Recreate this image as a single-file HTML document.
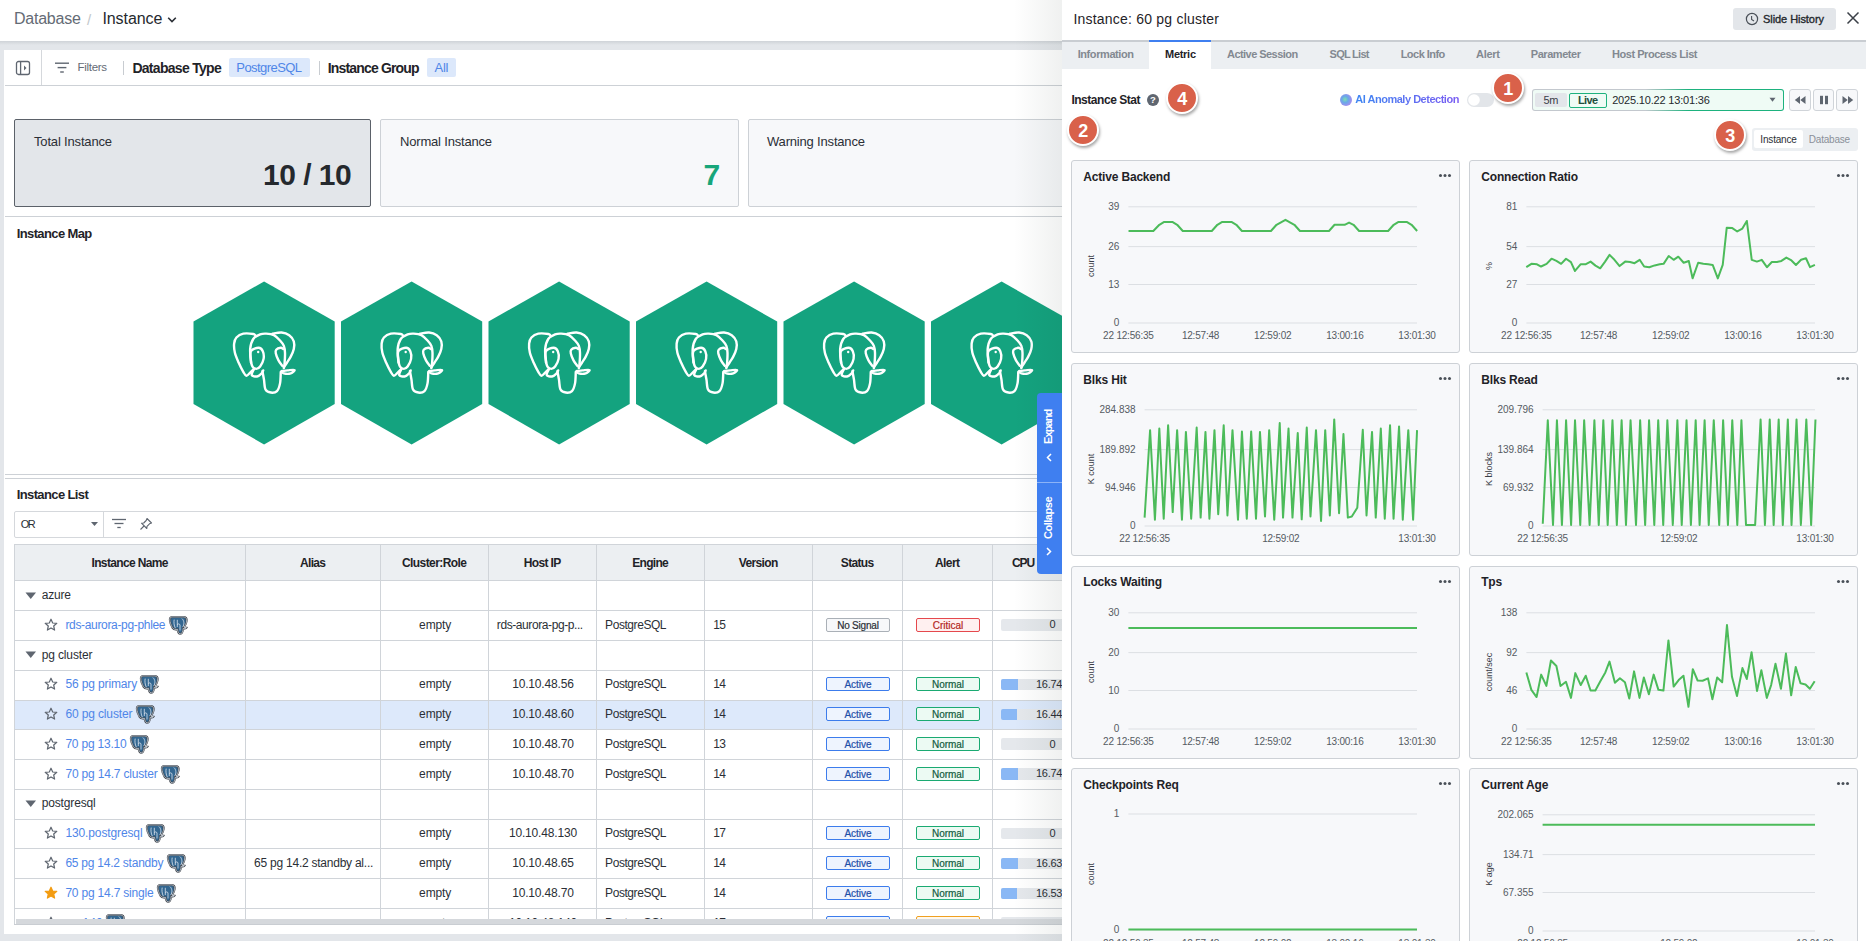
<!DOCTYPE html><html><head><meta charset="utf-8"><style>
html,body{margin:0;padding:0;}
body{width:1866px;height:941px;overflow:hidden;position:relative;background:#e3e6ea;font-family:'Liberation Sans', sans-serif;}
.t{position:absolute;white-space:nowrap;}
svg{position:absolute;overflow:visible;}
</style></head><body>
<div style="position:absolute;left:0px;top:0px;width:1866px;height:41px;background:#fff;"></div>
<div style="position:absolute;left:0px;top:41px;width:1866px;height:4px;background:linear-gradient(#cfd3d8,#e3e6ea);"></div>
<div class="t" style="left:13.90px;top:11.00px;font-size:16px;line-height:16px;letter-spacing:-0.214px;color:#646b75;">Database</div>
<div class="t" style="left:87.00px;top:12.00px;font-size:15px;line-height:15px;letter-spacing:0.000px;color:#c3c7cc;">/</div>
<div class="t" style="left:102.40px;top:11.00px;font-size:16px;line-height:16px;letter-spacing:-0.071px;color:#25292e;">Instance</div>
<svg style="left:167px;top:16px" width="10" height="8"><path d="M1.2 1.8 L5 5.6 L8.8 1.8" fill="none" stroke="#2b2f36" stroke-width="1.6"/></svg>
<div style="position:absolute;left:4px;top:50px;width:1858px;height:884px;background:#fff;"></div>
<div style="position:absolute;left:41px;top:50px;width:1px;height:35px;background:#d5d8dc;"></div>
<div style="position:absolute;left:5px;top:85px;width:1857px;height:1px;background:#cdd1d6;"></div>
<svg style="left:15px;top:60px" width="16" height="16"><rect x="1.5" y="1.5" width="13" height="13" rx="2" fill="none" stroke="#5f6670" stroke-width="1.3"/><line x1="5.6" y1="1.5" x2="5.6" y2="14.5" stroke="#5f6670" stroke-width="1.3"/><path d="M9 5.5 L11.5 8 L9 10.5 Z" fill="#5f6670"/></svg>
<svg style="left:54px;top:62px" width="16" height="12"><line x1="1" y1="1.2" x2="15" y2="1.2" stroke="#5f6670" stroke-width="1.4"/><line x1="3.6" y1="5.6" x2="12.4" y2="5.6" stroke="#5f6670" stroke-width="1.4"/><line x1="6.2" y1="10" x2="9.8" y2="10" stroke="#5f6670" stroke-width="1.4"/></svg>
<div class="t" style="left:77.50px;top:62.00px;font-size:11.5px;line-height:11.5px;letter-spacing:-0.300px;color:#646b75;">Filters</div>
<div style="position:absolute;left:123px;top:61px;width:1px;height:14px;background:#c8ccd1;"></div>
<div class="t" style="left:132.40px;top:61.00px;font-size:14px;line-height:14px;letter-spacing:-0.708px;color:#1f2328;font-weight:bold;">Database Type</div>
<div style="position:absolute;left:229px;top:58px;width:81px;height:19px;background:#dce8fb;border-radius:2px;"></div>
<div class="t" style="left:236.30px;top:61.00px;font-size:13px;line-height:13px;letter-spacing:-0.567px;color:#4f86e8;">PostgreSQL</div>
<div style="position:absolute;left:319px;top:61px;width:1px;height:14px;background:#c8ccd1;"></div>
<div class="t" style="left:327.80px;top:61.00px;font-size:14px;line-height:14px;letter-spacing:-0.838px;color:#1f2328;font-weight:bold;">Instance Group</div>
<div style="position:absolute;left:427px;top:58px;width:29px;height:19px;background:#dce8fb;border-radius:2px;"></div>
<div class="t" style="left:434.53px;top:61.00px;font-size:13px;line-height:13px;letter-spacing:-0.253px;color:#4f86e8;">All</div>
<div style="position:absolute;left:14px;top:119px;width:355px;height:86px;background:#e3e6ea;border:1px solid #5b6169;border-radius:2px;"></div>
<div class="t" style="left:34.00px;top:135.00px;font-size:13px;line-height:13px;letter-spacing:-0.169px;color:#2b2f36;">Total Instance</div>
<div class="t" style="left:263.00px;top:160.00px;font-size:30px;line-height:30px;letter-spacing:-0.525px;color:#25292e;font-weight:bold;">10 / 10</div>
<div style="position:absolute;left:380px;top:119px;width:357px;height:86px;background:#f7f8fa;border:1px solid #cdd1d6;border-radius:2px;"></div>
<div class="t" style="left:400.00px;top:135.00px;font-size:13px;line-height:13px;letter-spacing:-0.183px;color:#2b2f36;">Normal Instance</div>
<div class="t" style="left:703.54px;top:160.00px;font-size:30px;line-height:30px;letter-spacing:0.000px;color:#17a67a;font-weight:bold;">7</div>
<div style="position:absolute;left:748px;top:119px;width:357px;height:86px;background:#f7f8fa;border:1px solid #cdd1d6;border-radius:2px;"></div>
<div class="t" style="left:767.00px;top:135.00px;font-size:13px;line-height:13px;letter-spacing:-0.181px;color:#2b2f36;">Warning Instance</div>
<div style="position:absolute;left:5px;top:216px;width:1857px;height:1px;background:#cdd1d6;"></div>
<div class="t" style="left:16.70px;top:227.00px;font-size:13px;line-height:13px;letter-spacing:-0.614px;color:#1f2328;font-weight:bold;">Instance Map</div>
<svg style="left:0px;top:281px" width="1062" height="165"><g transform="translate(193.50,0)"><polygon points="70.6,0.5 141.2,40.5 141.2,123 70.6,163.5 0,123 0,40.5" fill="#14a37f"/><g transform="translate(39.5,51)"><g fill="none" stroke="#fff" stroke-width="2.4" stroke-linecap="round" stroke-linejoin="round"><path d="M22.93 3.95 C22.48 3.63 22.35 2.42 20.25 2.03 C18.14 1.65 13.11 1.08 10.30 1.65 C7.50 2.22 4.95 3.82 3.42 5.48 C1.89 7.13 1.38 9.05 1.12 11.60 C0.87 14.15 1.12 17.59 1.89 20.78 C2.65 23.97 4.31 27.54 5.71 30.73 C7.11 33.91 9.03 37.74 10.30 39.91 C11.58 42.07 12.21 43.60 13.36 43.73 C14.51 43.86 15.91 41.82 17.19 40.67 C18.46 39.52 20.38 37.48 21.01 36.85"/><path d="M17.95 30.73 C17.83 28.43 16.81 20.91 17.19 16.95 C17.57 13.00 18.59 9.43 20.25 7.01 C21.91 4.58 24.97 3.31 27.13 2.42 C29.30 1.52 30.96 1.52 33.26 1.65 C35.55 1.78 38.61 2.03 40.91 3.18 C43.20 4.33 45.37 6.75 47.03 8.54 C48.69 10.32 50.02 11.85 50.85 13.89 C51.68 15.93 51.87 17.97 52.00 20.78 C52.13 23.58 51.81 28.17 51.62 30.73 C51.43 33.28 50.98 35.19 50.85 36.08"/><path d="M39.38 1.65 C40.91 1.46 45.75 0.25 48.56 0.50 C51.36 0.76 54.17 1.71 56.21 3.18 C58.25 4.65 60.03 7.01 60.80 9.30 C61.56 11.60 61.31 14.40 60.80 16.95 C60.29 19.50 58.89 22.31 57.74 24.60 C56.59 26.90 55.06 28.94 53.91 30.73 C52.77 32.51 51.36 34.55 50.85 35.32"/><path d="M17.95 19.25 C19.23 17.14 23.63 15.81 25.60 15.81 C27.58 15.81 28.98 17.40 29.81 19.25 C30.64 21.10 31.02 24.35 30.58 26.90 C30.13 29.45 28.35 32.89 27.13 34.55 C25.92 36.21 24.58 36.85 23.31 36.85 C22.03 36.85 20.38 35.95 19.48 34.55 C18.59 33.15 18.21 30.98 17.95 28.43 C17.70 25.88 16.68 21.35 17.95 19.25 Z"/><path d="M50.09 16.95 C49.71 16.76 48.94 15.68 47.79 15.81 C46.64 15.93 44.03 16.76 43.20 17.72 C42.37 18.67 42.44 19.76 42.82 21.54 C43.20 23.33 44.41 26.39 45.50 28.43 C46.58 30.47 48.69 32.89 49.32 33.79"/><path d="M29.43 39.14 C29.69 40.54 30.45 44.50 30.96 47.56 C31.47 50.62 31.34 55.34 32.49 57.50 C33.64 59.67 35.93 60.31 37.85 60.56 C39.76 60.82 42.44 60.56 43.97 59.03 C45.50 57.50 46.39 54.57 47.03 51.38 C47.67 48.20 47.67 41.82 47.79 39.91"/><path d="M21.01 36.85 C20.63 37.87 18.21 41.69 18.72 42.97 C19.23 44.24 22.42 44.75 24.07 44.50 C25.73 44.24 27.64 42.46 28.66 41.44 C29.69 40.42 29.94 38.89 30.20 38.38"/><path d="M48.56 39.14 C49.58 39.01 52.51 38.57 54.68 38.38 C56.85 38.19 61.05 37.48 61.56 37.99 C62.07 38.50 59.52 40.86 57.74 41.44 C55.95 42.01 52.38 41.82 50.85 41.44 C49.32 41.05 48.94 39.52 48.56 39.14"/><circle cx="25.2" cy="20" r="1.2" fill="#fff" stroke="none"/></g></g></g><g transform="translate(341.00,0)"><polygon points="70.6,0.5 141.2,40.5 141.2,123 70.6,163.5 0,123 0,40.5" fill="#14a37f"/><g transform="translate(39.5,51)"><g fill="none" stroke="#fff" stroke-width="2.4" stroke-linecap="round" stroke-linejoin="round"><path d="M22.93 3.95 C22.48 3.63 22.35 2.42 20.25 2.03 C18.14 1.65 13.11 1.08 10.30 1.65 C7.50 2.22 4.95 3.82 3.42 5.48 C1.89 7.13 1.38 9.05 1.12 11.60 C0.87 14.15 1.12 17.59 1.89 20.78 C2.65 23.97 4.31 27.54 5.71 30.73 C7.11 33.91 9.03 37.74 10.30 39.91 C11.58 42.07 12.21 43.60 13.36 43.73 C14.51 43.86 15.91 41.82 17.19 40.67 C18.46 39.52 20.38 37.48 21.01 36.85"/><path d="M17.95 30.73 C17.83 28.43 16.81 20.91 17.19 16.95 C17.57 13.00 18.59 9.43 20.25 7.01 C21.91 4.58 24.97 3.31 27.13 2.42 C29.30 1.52 30.96 1.52 33.26 1.65 C35.55 1.78 38.61 2.03 40.91 3.18 C43.20 4.33 45.37 6.75 47.03 8.54 C48.69 10.32 50.02 11.85 50.85 13.89 C51.68 15.93 51.87 17.97 52.00 20.78 C52.13 23.58 51.81 28.17 51.62 30.73 C51.43 33.28 50.98 35.19 50.85 36.08"/><path d="M39.38 1.65 C40.91 1.46 45.75 0.25 48.56 0.50 C51.36 0.76 54.17 1.71 56.21 3.18 C58.25 4.65 60.03 7.01 60.80 9.30 C61.56 11.60 61.31 14.40 60.80 16.95 C60.29 19.50 58.89 22.31 57.74 24.60 C56.59 26.90 55.06 28.94 53.91 30.73 C52.77 32.51 51.36 34.55 50.85 35.32"/><path d="M17.95 19.25 C19.23 17.14 23.63 15.81 25.60 15.81 C27.58 15.81 28.98 17.40 29.81 19.25 C30.64 21.10 31.02 24.35 30.58 26.90 C30.13 29.45 28.35 32.89 27.13 34.55 C25.92 36.21 24.58 36.85 23.31 36.85 C22.03 36.85 20.38 35.95 19.48 34.55 C18.59 33.15 18.21 30.98 17.95 28.43 C17.70 25.88 16.68 21.35 17.95 19.25 Z"/><path d="M50.09 16.95 C49.71 16.76 48.94 15.68 47.79 15.81 C46.64 15.93 44.03 16.76 43.20 17.72 C42.37 18.67 42.44 19.76 42.82 21.54 C43.20 23.33 44.41 26.39 45.50 28.43 C46.58 30.47 48.69 32.89 49.32 33.79"/><path d="M29.43 39.14 C29.69 40.54 30.45 44.50 30.96 47.56 C31.47 50.62 31.34 55.34 32.49 57.50 C33.64 59.67 35.93 60.31 37.85 60.56 C39.76 60.82 42.44 60.56 43.97 59.03 C45.50 57.50 46.39 54.57 47.03 51.38 C47.67 48.20 47.67 41.82 47.79 39.91"/><path d="M21.01 36.85 C20.63 37.87 18.21 41.69 18.72 42.97 C19.23 44.24 22.42 44.75 24.07 44.50 C25.73 44.24 27.64 42.46 28.66 41.44 C29.69 40.42 29.94 38.89 30.20 38.38"/><path d="M48.56 39.14 C49.58 39.01 52.51 38.57 54.68 38.38 C56.85 38.19 61.05 37.48 61.56 37.99 C62.07 38.50 59.52 40.86 57.74 41.44 C55.95 42.01 52.38 41.82 50.85 41.44 C49.32 41.05 48.94 39.52 48.56 39.14"/><circle cx="25.2" cy="20" r="1.2" fill="#fff" stroke="none"/></g></g></g><g transform="translate(488.50,0)"><polygon points="70.6,0.5 141.2,40.5 141.2,123 70.6,163.5 0,123 0,40.5" fill="#14a37f"/><g transform="translate(39.5,51)"><g fill="none" stroke="#fff" stroke-width="2.4" stroke-linecap="round" stroke-linejoin="round"><path d="M22.93 3.95 C22.48 3.63 22.35 2.42 20.25 2.03 C18.14 1.65 13.11 1.08 10.30 1.65 C7.50 2.22 4.95 3.82 3.42 5.48 C1.89 7.13 1.38 9.05 1.12 11.60 C0.87 14.15 1.12 17.59 1.89 20.78 C2.65 23.97 4.31 27.54 5.71 30.73 C7.11 33.91 9.03 37.74 10.30 39.91 C11.58 42.07 12.21 43.60 13.36 43.73 C14.51 43.86 15.91 41.82 17.19 40.67 C18.46 39.52 20.38 37.48 21.01 36.85"/><path d="M17.95 30.73 C17.83 28.43 16.81 20.91 17.19 16.95 C17.57 13.00 18.59 9.43 20.25 7.01 C21.91 4.58 24.97 3.31 27.13 2.42 C29.30 1.52 30.96 1.52 33.26 1.65 C35.55 1.78 38.61 2.03 40.91 3.18 C43.20 4.33 45.37 6.75 47.03 8.54 C48.69 10.32 50.02 11.85 50.85 13.89 C51.68 15.93 51.87 17.97 52.00 20.78 C52.13 23.58 51.81 28.17 51.62 30.73 C51.43 33.28 50.98 35.19 50.85 36.08"/><path d="M39.38 1.65 C40.91 1.46 45.75 0.25 48.56 0.50 C51.36 0.76 54.17 1.71 56.21 3.18 C58.25 4.65 60.03 7.01 60.80 9.30 C61.56 11.60 61.31 14.40 60.80 16.95 C60.29 19.50 58.89 22.31 57.74 24.60 C56.59 26.90 55.06 28.94 53.91 30.73 C52.77 32.51 51.36 34.55 50.85 35.32"/><path d="M17.95 19.25 C19.23 17.14 23.63 15.81 25.60 15.81 C27.58 15.81 28.98 17.40 29.81 19.25 C30.64 21.10 31.02 24.35 30.58 26.90 C30.13 29.45 28.35 32.89 27.13 34.55 C25.92 36.21 24.58 36.85 23.31 36.85 C22.03 36.85 20.38 35.95 19.48 34.55 C18.59 33.15 18.21 30.98 17.95 28.43 C17.70 25.88 16.68 21.35 17.95 19.25 Z"/><path d="M50.09 16.95 C49.71 16.76 48.94 15.68 47.79 15.81 C46.64 15.93 44.03 16.76 43.20 17.72 C42.37 18.67 42.44 19.76 42.82 21.54 C43.20 23.33 44.41 26.39 45.50 28.43 C46.58 30.47 48.69 32.89 49.32 33.79"/><path d="M29.43 39.14 C29.69 40.54 30.45 44.50 30.96 47.56 C31.47 50.62 31.34 55.34 32.49 57.50 C33.64 59.67 35.93 60.31 37.85 60.56 C39.76 60.82 42.44 60.56 43.97 59.03 C45.50 57.50 46.39 54.57 47.03 51.38 C47.67 48.20 47.67 41.82 47.79 39.91"/><path d="M21.01 36.85 C20.63 37.87 18.21 41.69 18.72 42.97 C19.23 44.24 22.42 44.75 24.07 44.50 C25.73 44.24 27.64 42.46 28.66 41.44 C29.69 40.42 29.94 38.89 30.20 38.38"/><path d="M48.56 39.14 C49.58 39.01 52.51 38.57 54.68 38.38 C56.85 38.19 61.05 37.48 61.56 37.99 C62.07 38.50 59.52 40.86 57.74 41.44 C55.95 42.01 52.38 41.82 50.85 41.44 C49.32 41.05 48.94 39.52 48.56 39.14"/><circle cx="25.2" cy="20" r="1.2" fill="#fff" stroke="none"/></g></g></g><g transform="translate(636.00,0)"><polygon points="70.6,0.5 141.2,40.5 141.2,123 70.6,163.5 0,123 0,40.5" fill="#14a37f"/><g transform="translate(39.5,51)"><g fill="none" stroke="#fff" stroke-width="2.4" stroke-linecap="round" stroke-linejoin="round"><path d="M22.93 3.95 C22.48 3.63 22.35 2.42 20.25 2.03 C18.14 1.65 13.11 1.08 10.30 1.65 C7.50 2.22 4.95 3.82 3.42 5.48 C1.89 7.13 1.38 9.05 1.12 11.60 C0.87 14.15 1.12 17.59 1.89 20.78 C2.65 23.97 4.31 27.54 5.71 30.73 C7.11 33.91 9.03 37.74 10.30 39.91 C11.58 42.07 12.21 43.60 13.36 43.73 C14.51 43.86 15.91 41.82 17.19 40.67 C18.46 39.52 20.38 37.48 21.01 36.85"/><path d="M17.95 30.73 C17.83 28.43 16.81 20.91 17.19 16.95 C17.57 13.00 18.59 9.43 20.25 7.01 C21.91 4.58 24.97 3.31 27.13 2.42 C29.30 1.52 30.96 1.52 33.26 1.65 C35.55 1.78 38.61 2.03 40.91 3.18 C43.20 4.33 45.37 6.75 47.03 8.54 C48.69 10.32 50.02 11.85 50.85 13.89 C51.68 15.93 51.87 17.97 52.00 20.78 C52.13 23.58 51.81 28.17 51.62 30.73 C51.43 33.28 50.98 35.19 50.85 36.08"/><path d="M39.38 1.65 C40.91 1.46 45.75 0.25 48.56 0.50 C51.36 0.76 54.17 1.71 56.21 3.18 C58.25 4.65 60.03 7.01 60.80 9.30 C61.56 11.60 61.31 14.40 60.80 16.95 C60.29 19.50 58.89 22.31 57.74 24.60 C56.59 26.90 55.06 28.94 53.91 30.73 C52.77 32.51 51.36 34.55 50.85 35.32"/><path d="M17.95 19.25 C19.23 17.14 23.63 15.81 25.60 15.81 C27.58 15.81 28.98 17.40 29.81 19.25 C30.64 21.10 31.02 24.35 30.58 26.90 C30.13 29.45 28.35 32.89 27.13 34.55 C25.92 36.21 24.58 36.85 23.31 36.85 C22.03 36.85 20.38 35.95 19.48 34.55 C18.59 33.15 18.21 30.98 17.95 28.43 C17.70 25.88 16.68 21.35 17.95 19.25 Z"/><path d="M50.09 16.95 C49.71 16.76 48.94 15.68 47.79 15.81 C46.64 15.93 44.03 16.76 43.20 17.72 C42.37 18.67 42.44 19.76 42.82 21.54 C43.20 23.33 44.41 26.39 45.50 28.43 C46.58 30.47 48.69 32.89 49.32 33.79"/><path d="M29.43 39.14 C29.69 40.54 30.45 44.50 30.96 47.56 C31.47 50.62 31.34 55.34 32.49 57.50 C33.64 59.67 35.93 60.31 37.85 60.56 C39.76 60.82 42.44 60.56 43.97 59.03 C45.50 57.50 46.39 54.57 47.03 51.38 C47.67 48.20 47.67 41.82 47.79 39.91"/><path d="M21.01 36.85 C20.63 37.87 18.21 41.69 18.72 42.97 C19.23 44.24 22.42 44.75 24.07 44.50 C25.73 44.24 27.64 42.46 28.66 41.44 C29.69 40.42 29.94 38.89 30.20 38.38"/><path d="M48.56 39.14 C49.58 39.01 52.51 38.57 54.68 38.38 C56.85 38.19 61.05 37.48 61.56 37.99 C62.07 38.50 59.52 40.86 57.74 41.44 C55.95 42.01 52.38 41.82 50.85 41.44 C49.32 41.05 48.94 39.52 48.56 39.14"/><circle cx="25.2" cy="20" r="1.2" fill="#fff" stroke="none"/></g></g></g><g transform="translate(783.50,0)"><polygon points="70.6,0.5 141.2,40.5 141.2,123 70.6,163.5 0,123 0,40.5" fill="#14a37f"/><g transform="translate(39.5,51)"><g fill="none" stroke="#fff" stroke-width="2.4" stroke-linecap="round" stroke-linejoin="round"><path d="M22.93 3.95 C22.48 3.63 22.35 2.42 20.25 2.03 C18.14 1.65 13.11 1.08 10.30 1.65 C7.50 2.22 4.95 3.82 3.42 5.48 C1.89 7.13 1.38 9.05 1.12 11.60 C0.87 14.15 1.12 17.59 1.89 20.78 C2.65 23.97 4.31 27.54 5.71 30.73 C7.11 33.91 9.03 37.74 10.30 39.91 C11.58 42.07 12.21 43.60 13.36 43.73 C14.51 43.86 15.91 41.82 17.19 40.67 C18.46 39.52 20.38 37.48 21.01 36.85"/><path d="M17.95 30.73 C17.83 28.43 16.81 20.91 17.19 16.95 C17.57 13.00 18.59 9.43 20.25 7.01 C21.91 4.58 24.97 3.31 27.13 2.42 C29.30 1.52 30.96 1.52 33.26 1.65 C35.55 1.78 38.61 2.03 40.91 3.18 C43.20 4.33 45.37 6.75 47.03 8.54 C48.69 10.32 50.02 11.85 50.85 13.89 C51.68 15.93 51.87 17.97 52.00 20.78 C52.13 23.58 51.81 28.17 51.62 30.73 C51.43 33.28 50.98 35.19 50.85 36.08"/><path d="M39.38 1.65 C40.91 1.46 45.75 0.25 48.56 0.50 C51.36 0.76 54.17 1.71 56.21 3.18 C58.25 4.65 60.03 7.01 60.80 9.30 C61.56 11.60 61.31 14.40 60.80 16.95 C60.29 19.50 58.89 22.31 57.74 24.60 C56.59 26.90 55.06 28.94 53.91 30.73 C52.77 32.51 51.36 34.55 50.85 35.32"/><path d="M17.95 19.25 C19.23 17.14 23.63 15.81 25.60 15.81 C27.58 15.81 28.98 17.40 29.81 19.25 C30.64 21.10 31.02 24.35 30.58 26.90 C30.13 29.45 28.35 32.89 27.13 34.55 C25.92 36.21 24.58 36.85 23.31 36.85 C22.03 36.85 20.38 35.95 19.48 34.55 C18.59 33.15 18.21 30.98 17.95 28.43 C17.70 25.88 16.68 21.35 17.95 19.25 Z"/><path d="M50.09 16.95 C49.71 16.76 48.94 15.68 47.79 15.81 C46.64 15.93 44.03 16.76 43.20 17.72 C42.37 18.67 42.44 19.76 42.82 21.54 C43.20 23.33 44.41 26.39 45.50 28.43 C46.58 30.47 48.69 32.89 49.32 33.79"/><path d="M29.43 39.14 C29.69 40.54 30.45 44.50 30.96 47.56 C31.47 50.62 31.34 55.34 32.49 57.50 C33.64 59.67 35.93 60.31 37.85 60.56 C39.76 60.82 42.44 60.56 43.97 59.03 C45.50 57.50 46.39 54.57 47.03 51.38 C47.67 48.20 47.67 41.82 47.79 39.91"/><path d="M21.01 36.85 C20.63 37.87 18.21 41.69 18.72 42.97 C19.23 44.24 22.42 44.75 24.07 44.50 C25.73 44.24 27.64 42.46 28.66 41.44 C29.69 40.42 29.94 38.89 30.20 38.38"/><path d="M48.56 39.14 C49.58 39.01 52.51 38.57 54.68 38.38 C56.85 38.19 61.05 37.48 61.56 37.99 C62.07 38.50 59.52 40.86 57.74 41.44 C55.95 42.01 52.38 41.82 50.85 41.44 C49.32 41.05 48.94 39.52 48.56 39.14"/><circle cx="25.2" cy="20" r="1.2" fill="#fff" stroke="none"/></g></g></g><g transform="translate(931.00,0)"><polygon points="70.6,0.5 141.2,40.5 141.2,123 70.6,163.5 0,123 0,40.5" fill="#14a37f"/><g transform="translate(39.5,51)"><g fill="none" stroke="#fff" stroke-width="2.4" stroke-linecap="round" stroke-linejoin="round"><path d="M22.93 3.95 C22.48 3.63 22.35 2.42 20.25 2.03 C18.14 1.65 13.11 1.08 10.30 1.65 C7.50 2.22 4.95 3.82 3.42 5.48 C1.89 7.13 1.38 9.05 1.12 11.60 C0.87 14.15 1.12 17.59 1.89 20.78 C2.65 23.97 4.31 27.54 5.71 30.73 C7.11 33.91 9.03 37.74 10.30 39.91 C11.58 42.07 12.21 43.60 13.36 43.73 C14.51 43.86 15.91 41.82 17.19 40.67 C18.46 39.52 20.38 37.48 21.01 36.85"/><path d="M17.95 30.73 C17.83 28.43 16.81 20.91 17.19 16.95 C17.57 13.00 18.59 9.43 20.25 7.01 C21.91 4.58 24.97 3.31 27.13 2.42 C29.30 1.52 30.96 1.52 33.26 1.65 C35.55 1.78 38.61 2.03 40.91 3.18 C43.20 4.33 45.37 6.75 47.03 8.54 C48.69 10.32 50.02 11.85 50.85 13.89 C51.68 15.93 51.87 17.97 52.00 20.78 C52.13 23.58 51.81 28.17 51.62 30.73 C51.43 33.28 50.98 35.19 50.85 36.08"/><path d="M39.38 1.65 C40.91 1.46 45.75 0.25 48.56 0.50 C51.36 0.76 54.17 1.71 56.21 3.18 C58.25 4.65 60.03 7.01 60.80 9.30 C61.56 11.60 61.31 14.40 60.80 16.95 C60.29 19.50 58.89 22.31 57.74 24.60 C56.59 26.90 55.06 28.94 53.91 30.73 C52.77 32.51 51.36 34.55 50.85 35.32"/><path d="M17.95 19.25 C19.23 17.14 23.63 15.81 25.60 15.81 C27.58 15.81 28.98 17.40 29.81 19.25 C30.64 21.10 31.02 24.35 30.58 26.90 C30.13 29.45 28.35 32.89 27.13 34.55 C25.92 36.21 24.58 36.85 23.31 36.85 C22.03 36.85 20.38 35.95 19.48 34.55 C18.59 33.15 18.21 30.98 17.95 28.43 C17.70 25.88 16.68 21.35 17.95 19.25 Z"/><path d="M50.09 16.95 C49.71 16.76 48.94 15.68 47.79 15.81 C46.64 15.93 44.03 16.76 43.20 17.72 C42.37 18.67 42.44 19.76 42.82 21.54 C43.20 23.33 44.41 26.39 45.50 28.43 C46.58 30.47 48.69 32.89 49.32 33.79"/><path d="M29.43 39.14 C29.69 40.54 30.45 44.50 30.96 47.56 C31.47 50.62 31.34 55.34 32.49 57.50 C33.64 59.67 35.93 60.31 37.85 60.56 C39.76 60.82 42.44 60.56 43.97 59.03 C45.50 57.50 46.39 54.57 47.03 51.38 C47.67 48.20 47.67 41.82 47.79 39.91"/><path d="M21.01 36.85 C20.63 37.87 18.21 41.69 18.72 42.97 C19.23 44.24 22.42 44.75 24.07 44.50 C25.73 44.24 27.64 42.46 28.66 41.44 C29.69 40.42 29.94 38.89 30.20 38.38"/><path d="M48.56 39.14 C49.58 39.01 52.51 38.57 54.68 38.38 C56.85 38.19 61.05 37.48 61.56 37.99 C62.07 38.50 59.52 40.86 57.74 41.44 C55.95 42.01 52.38 41.82 50.85 41.44 C49.32 41.05 48.94 39.52 48.56 39.14"/><circle cx="25.2" cy="20" r="1.2" fill="#fff" stroke="none"/></g></g></g></svg>
<div style="position:absolute;left:5px;top:474px;width:1857px;height:1px;background:#cdd1d6;"></div>
<div style="position:absolute;left:5px;top:478px;width:1857px;height:1px;background:#cdd1d6;"></div>
<div class="t" style="left:16.70px;top:488.00px;font-size:13px;line-height:13px;letter-spacing:-0.613px;color:#1f2328;font-weight:bold;">Instance List</div>
<div style="position:absolute;left:14px;top:511px;width:1848px;height:25px;border:1px solid #d5d8dc;border-radius:2px;"></div>
<div style="position:absolute;left:103px;top:512px;width:1px;height:25px;background:#d5d8dc;"></div>
<div class="t" style="left:20.80px;top:519.00px;font-size:11px;line-height:11px;letter-spacing:-1.600px;color:#2b2f36;">OR</div>
<svg style="left:91px;top:522px" width="8" height="5"><path d="M0 0 L7 0 L3.5 4 Z" fill="#5f6670"/></svg>
<svg style="left:111px;top:518px" width="16" height="12"><line x1="1" y1="1.5" x2="15" y2="1.5" stroke="#5f6670" stroke-width="1.3"/><line x1="3.5" y1="5.5" x2="12.5" y2="5.5" stroke="#5f6670" stroke-width="1.3"/><line x1="6.3" y1="9.5" x2="9.7" y2="9.5" stroke="#5f6670" stroke-width="1.3"/></svg>
<svg style="left:139px;top:517px" width="14" height="14"><path d="M8 1.5 L12.5 6 L10.5 6.8 L8 9.3 L7.8 11.5 L2.5 6.2 L4.7 6 L7.2 3.5 Z" fill="none" stroke="#5f6670" stroke-width="1.1" stroke-linejoin="round"/><line x1="5" y1="9" x2="1.5" y2="12.5" stroke="#5f6670" stroke-width="1.1"/></svg>
<div style="position:absolute;left:14px;top:544px;width:1848px;height:381px;overflow:hidden;">
<div style="position:absolute;left:0.00px;top:0.50px;width:1848.00px;height:36.00px;background:#eceff2;"></div>
<div style="position:absolute;left:0.00px;top:155.50px;width:1848.00px;height:29.80px;background:#dde9fb;"></div>
<div style="position:absolute;left:0.00px;top:0.00px;width:1848.00px;height:1.00px;background:#d0d4d9;"></div>
<div style="position:absolute;left:0.00px;top:36.30px;width:1848.00px;height:1.00px;background:#d0d4d9;"></div>
<div style="position:absolute;left:0.00px;top:66.20px;width:1848.00px;height:1.00px;background:#d0d4d9;"></div>
<div style="position:absolute;left:0.00px;top:96.00px;width:1848.00px;height:1.00px;background:#d0d4d9;"></div>
<div style="position:absolute;left:0.00px;top:125.60px;width:1848.00px;height:1.00px;background:#d0d4d9;"></div>
<div style="position:absolute;left:0.00px;top:155.50px;width:1848.00px;height:1.00px;background:#d0d4d9;"></div>
<div style="position:absolute;left:0.00px;top:185.30px;width:1848.00px;height:1.00px;background:#d0d4d9;"></div>
<div style="position:absolute;left:0.00px;top:215.20px;width:1848.00px;height:1.00px;background:#d0d4d9;"></div>
<div style="position:absolute;left:0.00px;top:244.80px;width:1848.00px;height:1.00px;background:#d0d4d9;"></div>
<div style="position:absolute;left:0.00px;top:274.50px;width:1848.00px;height:1.00px;background:#d0d4d9;"></div>
<div style="position:absolute;left:0.00px;top:304.40px;width:1848.00px;height:1.00px;background:#d0d4d9;"></div>
<div style="position:absolute;left:0.00px;top:334.40px;width:1848.00px;height:1.00px;background:#d0d4d9;"></div>
<div style="position:absolute;left:0.00px;top:364.30px;width:1848.00px;height:1.00px;background:#d0d4d9;"></div>
<div style="position:absolute;left:0.00px;top:0.00px;width:1.00px;height:381.00px;background:#d0d4d9;"></div>
<div style="position:absolute;left:231.00px;top:0.00px;width:1.00px;height:381.00px;background:#d0d4d9;"></div>
<div style="position:absolute;left:366.00px;top:0.00px;width:1.00px;height:381.00px;background:#d0d4d9;"></div>
<div style="position:absolute;left:474.00px;top:0.00px;width:1.00px;height:381.00px;background:#d0d4d9;"></div>
<div style="position:absolute;left:582.00px;top:0.00px;width:1.00px;height:381.00px;background:#d0d4d9;"></div>
<div style="position:absolute;left:690.00px;top:0.00px;width:1.00px;height:381.00px;background:#d0d4d9;"></div>
<div style="position:absolute;left:798.00px;top:0.00px;width:1.00px;height:381.00px;background:#d0d4d9;"></div>
<div style="position:absolute;left:888.00px;top:0.00px;width:1.00px;height:381.00px;background:#d0d4d9;"></div>
<div style="position:absolute;left:978.00px;top:0.00px;width:1.00px;height:381.00px;background:#d0d4d9;"></div>
<div style="position:absolute;left:1068.00px;top:0.00px;width:1.00px;height:381.00px;background:#d0d4d9;"></div>
<div class="t" style="left:77.46px;top:13.00px;font-size:12px;line-height:12px;letter-spacing:-0.635px;color:#1f2328;font-weight:bold;">Instance Name</div>
<div class="t" style="left:285.94px;top:13.00px;font-size:12px;line-height:12px;letter-spacing:-0.646px;color:#1f2328;font-weight:bold;">Alias</div>
<div class="t" style="left:388.04px;top:13.00px;font-size:12px;line-height:12px;letter-spacing:-0.584px;color:#1f2328;font-weight:bold;">Cluster:Role</div>
<div class="t" style="left:509.69px;top:13.00px;font-size:12px;line-height:12px;letter-spacing:-0.620px;color:#1f2328;font-weight:bold;">Host IP</div>
<div class="t" style="left:618.30px;top:13.00px;font-size:12px;line-height:12px;letter-spacing:-0.720px;color:#1f2328;font-weight:bold;">Engine</div>
<div class="t" style="left:724.78px;top:13.00px;font-size:12px;line-height:12px;letter-spacing:-0.650px;color:#1f2328;font-weight:bold;">Version</div>
<div class="t" style="left:826.80px;top:13.00px;font-size:12px;line-height:12px;letter-spacing:-0.661px;color:#1f2328;font-weight:bold;">Status</div>
<div class="t" style="left:921.06px;top:13.00px;font-size:12px;line-height:12px;letter-spacing:-0.615px;color:#1f2328;font-weight:bold;">Alert</div>
<div class="t" style="left:998.00px;top:13.00px;font-size:12px;line-height:12px;letter-spacing:-1.141px;color:#1f2328;font-weight:bold;">CPU</div>
<svg style="left:10.50px;top:47.75px" width="12" height="8"><path d="M0.5 0.5 L11 0.5 L5.75 7 Z" fill="#5f6670"/></svg>
<div class="t" style="left:27.70px;top:45.00px;font-size:12px;line-height:12px;letter-spacing:-0.180px;color:#2b2f36;">azure</div>
<svg style="left:30.00px;top:73.60px" width="14" height="14"><path d="M7 1.2 L8.7 5 L12.8 5.3 L9.7 8 L10.6 12.1 L7 9.9 L3.4 12.1 L4.3 8 L1.2 5.3 L5.3 5 Z" fill="none" stroke="#5f6670" stroke-width="1.2" stroke-linejoin="round"/></svg>
<div class="t" style="left:51.40px;top:75.00px;font-size:12px;line-height:12px;letter-spacing:-0.331px;color:#4f86e8;">rds-aurora-pg-phlee</div>
<svg style="left:154.50px;top:71.80px" width="19" height="19" viewBox="0 0 19 19"><path d="M3 0.9 L15 0.9 C17 1.2 17.9 3 17.7 5 C17.4 7.5 16.3 9.5 15.2 10.8 L17.6 11.6 C17.1 12.6 15.6 12.7 14.1 12.3 C13.9 15.2 13.5 17.7 11.4 17.8 C9.4 17.9 8.8 15.6 8.5 13.3 C6.5 13.9 4.4 13.1 3.4 11.6 C1.9 9 1 6 0.8 4 C0.7 2 1.5 1.1 3 0.9 Z" fill="#336791" stroke="#3a3f46" stroke-width="1.9"/><path d="M3 0.9 L15 0.9 C17 1.2 17.9 3 17.7 5 C17.4 7.5 16.3 9.5 15.2 10.8 L17.6 11.6 C17.1 12.6 15.6 12.7 14.1 12.3 C13.9 15.2 13.5 17.7 11.4 17.8 C9.4 17.9 8.8 15.6 8.5 13.3 C6.5 13.9 4.4 13.1 3.4 11.6 C1.9 9 1 6 0.8 4 C0.7 2 1.5 1.1 3 0.9 Z" fill="none" stroke="#dfe8f2" stroke-width="0.7"/><path d="M5.2 3.6 C4.7 6 4.9 9.5 6.4 12.2 M8.3 3.8 L8.3 11 M8.3 8.6 C9 7.6 10.6 7.6 11 9 L11 14.5 M12.9 2.6 C15.2 4.4 15.6 8.6 13.6 11.2 M15 11.1 L16.9 11.7" fill="none" stroke="#e8eef5" stroke-width="0.75"/></svg>
<div class="t" style="left:405.10px;top:75.00px;font-size:12px;line-height:12px;letter-spacing:-0.125px;color:#2b2f36;">empty</div>
<div class="t" style="left:482.85px;top:75.00px;font-size:12px;line-height:12px;letter-spacing:-0.415px;color:#2b2f36;">rds-aurora-pg-p...</div>
<div class="t" style="left:591.10px;top:75.00px;font-size:12px;line-height:12px;letter-spacing:-0.439px;color:#2b2f36;">PostgreSQL</div>
<div class="t" style="left:699.20px;top:75.00px;font-size:12px;line-height:12px;letter-spacing:-0.534px;color:#2b2f36;">15</div>
<div style="position:absolute;left:812.30px;top:73.90px;width:63.40px;height:14.00px;background:#f7f8fa;border:1px solid #aab0b7;border-radius:2px;box-sizing:border-box;"></div>
<div class="t" style="left:823.13px;top:77.00px;font-size:10px;line-height:10px;letter-spacing:-0.200px;color:#2b2f36;-webkit-text-stroke:0.2px #2b2f36;">No Signal</div>
<div style="position:absolute;left:902.20px;top:73.90px;width:63.40px;height:14.00px;background:#fff0f0;border:1px solid #e5484d;border-radius:2px;box-sizing:border-box;"></div>
<div class="t" style="left:918.80px;top:77.00px;font-size:10px;line-height:10px;letter-spacing:-0.022px;color:#b3261e;-webkit-text-stroke:0.2px #b3261e;">Critical</div>
<div style="position:absolute;left:987.20px;top:75.30px;width:80.00px;height:11.60px;background:#e5e8ec;border-radius:2px;"></div>
<div class="t" style="left:1035.61px;top:75.00px;font-size:11px;line-height:11px;letter-spacing:0.000px;color:#2b2f36;">0</div>
<svg style="left:10.50px;top:107.30px" width="12" height="8"><path d="M0.5 0.5 L11 0.5 L5.75 7 Z" fill="#5f6670"/></svg>
<div class="t" style="left:27.70px;top:105.00px;font-size:12px;line-height:12px;letter-spacing:-0.139px;color:#2b2f36;">pg cluster</div>
<svg style="left:30.00px;top:133.05px" width="14" height="14"><path d="M7 1.2 L8.7 5 L12.8 5.3 L9.7 8 L10.6 12.1 L7 9.9 L3.4 12.1 L4.3 8 L1.2 5.3 L5.3 5 Z" fill="none" stroke="#5f6670" stroke-width="1.2" stroke-linejoin="round"/></svg>
<div class="t" style="left:51.40px;top:134.00px;font-size:12px;line-height:12px;letter-spacing:-0.129px;color:#4f86e8;">56 pg primary</div>
<svg style="left:126.20px;top:131.25px" width="19" height="19" viewBox="0 0 19 19"><path d="M3 0.9 L15 0.9 C17 1.2 17.9 3 17.7 5 C17.4 7.5 16.3 9.5 15.2 10.8 L17.6 11.6 C17.1 12.6 15.6 12.7 14.1 12.3 C13.9 15.2 13.5 17.7 11.4 17.8 C9.4 17.9 8.8 15.6 8.5 13.3 C6.5 13.9 4.4 13.1 3.4 11.6 C1.9 9 1 6 0.8 4 C0.7 2 1.5 1.1 3 0.9 Z" fill="#336791" stroke="#3a3f46" stroke-width="1.9"/><path d="M3 0.9 L15 0.9 C17 1.2 17.9 3 17.7 5 C17.4 7.5 16.3 9.5 15.2 10.8 L17.6 11.6 C17.1 12.6 15.6 12.7 14.1 12.3 C13.9 15.2 13.5 17.7 11.4 17.8 C9.4 17.9 8.8 15.6 8.5 13.3 C6.5 13.9 4.4 13.1 3.4 11.6 C1.9 9 1 6 0.8 4 C0.7 2 1.5 1.1 3 0.9 Z" fill="none" stroke="#dfe8f2" stroke-width="0.7"/><path d="M5.2 3.6 C4.7 6 4.9 9.5 6.4 12.2 M8.3 3.8 L8.3 11 M8.3 8.6 C9 7.6 10.6 7.6 11 9 L11 14.5 M12.9 2.6 C15.2 4.4 15.6 8.6 13.6 11.2 M15 11.1 L16.9 11.7" fill="none" stroke="#e8eef5" stroke-width="0.75"/></svg>
<div class="t" style="left:405.10px;top:134.00px;font-size:12px;line-height:12px;letter-spacing:-0.125px;color:#2b2f36;">empty</div>
<div class="t" style="left:498.16px;top:134.00px;font-size:12px;line-height:12px;letter-spacing:-0.171px;color:#2b2f36;">10.10.48.56</div>
<div class="t" style="left:591.10px;top:134.00px;font-size:12px;line-height:12px;letter-spacing:-0.439px;color:#2b2f36;">PostgreSQL</div>
<div class="t" style="left:699.20px;top:134.00px;font-size:12px;line-height:12px;letter-spacing:-0.534px;color:#2b2f36;">14</div>
<div style="position:absolute;left:812.30px;top:133.35px;width:63.40px;height:14.00px;background:#eef4fe;border:1px solid #3c7cec;border-radius:2px;box-sizing:border-box;"></div>
<div class="t" style="left:830.51px;top:136.00px;font-size:10px;line-height:10px;letter-spacing:-0.055px;color:#1f4fa8;-webkit-text-stroke:0.2px #1f4fa8;">Active</div>
<div style="position:absolute;left:902.20px;top:133.35px;width:63.40px;height:14.00px;background:#ecfaf3;border:1px solid #1aaa72;border-radius:2px;box-sizing:border-box;"></div>
<div class="t" style="left:917.96px;top:136.00px;font-size:10px;line-height:10px;letter-spacing:-0.032px;color:#145c40;-webkit-text-stroke:0.2px #145c40;">Normal</div>
<div style="position:absolute;left:987.20px;top:134.75px;width:80.00px;height:11.60px;background:#e5e8ec;border-radius:2px;"></div>
<div style="position:absolute;left:987.20px;top:134.75px;width:17.00px;height:11.60px;background:#8ab8f5;border-radius:2px 0 0 2px;"></div>
<div class="t" style="left:1021.91px;top:135.00px;font-size:11px;line-height:11px;letter-spacing:-0.241px;color:#2b2f36;">16.74</div>
<svg style="left:30.00px;top:162.90px" width="14" height="14"><path d="M7 1.2 L8.7 5 L12.8 5.3 L9.7 8 L10.6 12.1 L7 9.9 L3.4 12.1 L4.3 8 L1.2 5.3 L5.3 5 Z" fill="none" stroke="#5f6670" stroke-width="1.2" stroke-linejoin="round"/></svg>
<div class="t" style="left:51.40px;top:164.00px;font-size:12px;line-height:12px;letter-spacing:-0.133px;color:#4f86e8;">60 pg cluster</div>
<svg style="left:121.50px;top:161.10px" width="19" height="19" viewBox="0 0 19 19"><path d="M3 0.9 L15 0.9 C17 1.2 17.9 3 17.7 5 C17.4 7.5 16.3 9.5 15.2 10.8 L17.6 11.6 C17.1 12.6 15.6 12.7 14.1 12.3 C13.9 15.2 13.5 17.7 11.4 17.8 C9.4 17.9 8.8 15.6 8.5 13.3 C6.5 13.9 4.4 13.1 3.4 11.6 C1.9 9 1 6 0.8 4 C0.7 2 1.5 1.1 3 0.9 Z" fill="#336791" stroke="#3a3f46" stroke-width="1.9"/><path d="M3 0.9 L15 0.9 C17 1.2 17.9 3 17.7 5 C17.4 7.5 16.3 9.5 15.2 10.8 L17.6 11.6 C17.1 12.6 15.6 12.7 14.1 12.3 C13.9 15.2 13.5 17.7 11.4 17.8 C9.4 17.9 8.8 15.6 8.5 13.3 C6.5 13.9 4.4 13.1 3.4 11.6 C1.9 9 1 6 0.8 4 C0.7 2 1.5 1.1 3 0.9 Z" fill="none" stroke="#dfe8f2" stroke-width="0.7"/><path d="M5.2 3.6 C4.7 6 4.9 9.5 6.4 12.2 M8.3 3.8 L8.3 11 M8.3 8.6 C9 7.6 10.6 7.6 11 9 L11 14.5 M12.9 2.6 C15.2 4.4 15.6 8.6 13.6 11.2 M15 11.1 L16.9 11.7" fill="none" stroke="#e8eef5" stroke-width="0.75"/></svg>
<div class="t" style="left:405.10px;top:164.00px;font-size:12px;line-height:12px;letter-spacing:-0.125px;color:#2b2f36;">empty</div>
<div class="t" style="left:498.16px;top:164.00px;font-size:12px;line-height:12px;letter-spacing:-0.171px;color:#2b2f36;">10.10.48.60</div>
<div class="t" style="left:591.10px;top:164.00px;font-size:12px;line-height:12px;letter-spacing:-0.439px;color:#2b2f36;">PostgreSQL</div>
<div class="t" style="left:699.20px;top:164.00px;font-size:12px;line-height:12px;letter-spacing:-0.534px;color:#2b2f36;">14</div>
<div style="position:absolute;left:812.30px;top:163.20px;width:63.40px;height:14.00px;background:#eef4fe;border:1px solid #3c7cec;border-radius:2px;box-sizing:border-box;"></div>
<div class="t" style="left:830.51px;top:166.00px;font-size:10px;line-height:10px;letter-spacing:-0.055px;color:#1f4fa8;-webkit-text-stroke:0.2px #1f4fa8;">Active</div>
<div style="position:absolute;left:902.20px;top:163.20px;width:63.40px;height:14.00px;background:#ecfaf3;border:1px solid #1aaa72;border-radius:2px;box-sizing:border-box;"></div>
<div class="t" style="left:917.96px;top:166.00px;font-size:10px;line-height:10px;letter-spacing:-0.032px;color:#145c40;-webkit-text-stroke:0.2px #145c40;">Normal</div>
<div style="position:absolute;left:987.20px;top:164.60px;width:80.00px;height:11.60px;background:#e5e8ec;border-radius:2px;"></div>
<div style="position:absolute;left:987.20px;top:164.60px;width:16.00px;height:11.60px;background:#8ab8f5;border-radius:2px 0 0 2px;"></div>
<div class="t" style="left:1021.91px;top:165.00px;font-size:11px;line-height:11px;letter-spacing:-0.241px;color:#2b2f36;">16.44</div>
<svg style="left:30.00px;top:192.75px" width="14" height="14"><path d="M7 1.2 L8.7 5 L12.8 5.3 L9.7 8 L10.6 12.1 L7 9.9 L3.4 12.1 L4.3 8 L1.2 5.3 L5.3 5 Z" fill="none" stroke="#5f6670" stroke-width="1.2" stroke-linejoin="round"/></svg>
<div class="t" style="left:51.40px;top:194.00px;font-size:12px;line-height:12px;letter-spacing:-0.210px;color:#4f86e8;">70 pg 13.10</div>
<svg style="left:115.70px;top:190.95px" width="19" height="19" viewBox="0 0 19 19"><path d="M3 0.9 L15 0.9 C17 1.2 17.9 3 17.7 5 C17.4 7.5 16.3 9.5 15.2 10.8 L17.6 11.6 C17.1 12.6 15.6 12.7 14.1 12.3 C13.9 15.2 13.5 17.7 11.4 17.8 C9.4 17.9 8.8 15.6 8.5 13.3 C6.5 13.9 4.4 13.1 3.4 11.6 C1.9 9 1 6 0.8 4 C0.7 2 1.5 1.1 3 0.9 Z" fill="#336791" stroke="#3a3f46" stroke-width="1.9"/><path d="M3 0.9 L15 0.9 C17 1.2 17.9 3 17.7 5 C17.4 7.5 16.3 9.5 15.2 10.8 L17.6 11.6 C17.1 12.6 15.6 12.7 14.1 12.3 C13.9 15.2 13.5 17.7 11.4 17.8 C9.4 17.9 8.8 15.6 8.5 13.3 C6.5 13.9 4.4 13.1 3.4 11.6 C1.9 9 1 6 0.8 4 C0.7 2 1.5 1.1 3 0.9 Z" fill="none" stroke="#dfe8f2" stroke-width="0.7"/><path d="M5.2 3.6 C4.7 6 4.9 9.5 6.4 12.2 M8.3 3.8 L8.3 11 M8.3 8.6 C9 7.6 10.6 7.6 11 9 L11 14.5 M12.9 2.6 C15.2 4.4 15.6 8.6 13.6 11.2 M15 11.1 L16.9 11.7" fill="none" stroke="#e8eef5" stroke-width="0.75"/></svg>
<div class="t" style="left:405.10px;top:194.00px;font-size:12px;line-height:12px;letter-spacing:-0.125px;color:#2b2f36;">empty</div>
<div class="t" style="left:498.16px;top:194.00px;font-size:12px;line-height:12px;letter-spacing:-0.171px;color:#2b2f36;">10.10.48.70</div>
<div class="t" style="left:591.10px;top:194.00px;font-size:12px;line-height:12px;letter-spacing:-0.439px;color:#2b2f36;">PostgreSQL</div>
<div class="t" style="left:699.20px;top:194.00px;font-size:12px;line-height:12px;letter-spacing:-0.534px;color:#2b2f36;">13</div>
<div style="position:absolute;left:812.30px;top:193.05px;width:63.40px;height:14.00px;background:#eef4fe;border:1px solid #3c7cec;border-radius:2px;box-sizing:border-box;"></div>
<div class="t" style="left:830.51px;top:196.00px;font-size:10px;line-height:10px;letter-spacing:-0.055px;color:#1f4fa8;-webkit-text-stroke:0.2px #1f4fa8;">Active</div>
<div style="position:absolute;left:902.20px;top:193.05px;width:63.40px;height:14.00px;background:#ecfaf3;border:1px solid #1aaa72;border-radius:2px;box-sizing:border-box;"></div>
<div class="t" style="left:917.96px;top:196.00px;font-size:10px;line-height:10px;letter-spacing:-0.032px;color:#145c40;-webkit-text-stroke:0.2px #145c40;">Normal</div>
<div style="position:absolute;left:987.20px;top:194.45px;width:80.00px;height:11.60px;background:#e5e8ec;border-radius:2px;"></div>
<div class="t" style="left:1035.61px;top:195.00px;font-size:11px;line-height:11px;letter-spacing:0.000px;color:#2b2f36;">0</div>
<svg style="left:30.00px;top:222.50px" width="14" height="14"><path d="M7 1.2 L8.7 5 L12.8 5.3 L9.7 8 L10.6 12.1 L7 9.9 L3.4 12.1 L4.3 8 L1.2 5.3 L5.3 5 Z" fill="none" stroke="#5f6670" stroke-width="1.2" stroke-linejoin="round"/></svg>
<div class="t" style="left:51.40px;top:224.00px;font-size:12px;line-height:12px;letter-spacing:-0.182px;color:#4f86e8;">70 pg 14.7 cluster</div>
<svg style="left:146.70px;top:220.70px" width="19" height="19" viewBox="0 0 19 19"><path d="M3 0.9 L15 0.9 C17 1.2 17.9 3 17.7 5 C17.4 7.5 16.3 9.5 15.2 10.8 L17.6 11.6 C17.1 12.6 15.6 12.7 14.1 12.3 C13.9 15.2 13.5 17.7 11.4 17.8 C9.4 17.9 8.8 15.6 8.5 13.3 C6.5 13.9 4.4 13.1 3.4 11.6 C1.9 9 1 6 0.8 4 C0.7 2 1.5 1.1 3 0.9 Z" fill="#336791" stroke="#3a3f46" stroke-width="1.9"/><path d="M3 0.9 L15 0.9 C17 1.2 17.9 3 17.7 5 C17.4 7.5 16.3 9.5 15.2 10.8 L17.6 11.6 C17.1 12.6 15.6 12.7 14.1 12.3 C13.9 15.2 13.5 17.7 11.4 17.8 C9.4 17.9 8.8 15.6 8.5 13.3 C6.5 13.9 4.4 13.1 3.4 11.6 C1.9 9 1 6 0.8 4 C0.7 2 1.5 1.1 3 0.9 Z" fill="none" stroke="#dfe8f2" stroke-width="0.7"/><path d="M5.2 3.6 C4.7 6 4.9 9.5 6.4 12.2 M8.3 3.8 L8.3 11 M8.3 8.6 C9 7.6 10.6 7.6 11 9 L11 14.5 M12.9 2.6 C15.2 4.4 15.6 8.6 13.6 11.2 M15 11.1 L16.9 11.7" fill="none" stroke="#e8eef5" stroke-width="0.75"/></svg>
<div class="t" style="left:405.10px;top:224.00px;font-size:12px;line-height:12px;letter-spacing:-0.125px;color:#2b2f36;">empty</div>
<div class="t" style="left:498.16px;top:224.00px;font-size:12px;line-height:12px;letter-spacing:-0.171px;color:#2b2f36;">10.10.48.70</div>
<div class="t" style="left:591.10px;top:224.00px;font-size:12px;line-height:12px;letter-spacing:-0.439px;color:#2b2f36;">PostgreSQL</div>
<div class="t" style="left:699.20px;top:224.00px;font-size:12px;line-height:12px;letter-spacing:-0.534px;color:#2b2f36;">14</div>
<div style="position:absolute;left:812.30px;top:222.80px;width:63.40px;height:14.00px;background:#eef4fe;border:1px solid #3c7cec;border-radius:2px;box-sizing:border-box;"></div>
<div class="t" style="left:830.51px;top:226.00px;font-size:10px;line-height:10px;letter-spacing:-0.055px;color:#1f4fa8;-webkit-text-stroke:0.2px #1f4fa8;">Active</div>
<div style="position:absolute;left:902.20px;top:222.80px;width:63.40px;height:14.00px;background:#ecfaf3;border:1px solid #1aaa72;border-radius:2px;box-sizing:border-box;"></div>
<div class="t" style="left:917.96px;top:226.00px;font-size:10px;line-height:10px;letter-spacing:-0.032px;color:#145c40;-webkit-text-stroke:0.2px #145c40;">Normal</div>
<div style="position:absolute;left:987.20px;top:224.20px;width:80.00px;height:11.60px;background:#e5e8ec;border-radius:2px;"></div>
<div style="position:absolute;left:987.20px;top:224.20px;width:17.00px;height:11.60px;background:#8ab8f5;border-radius:2px 0 0 2px;"></div>
<div class="t" style="left:1021.91px;top:224.00px;font-size:11px;line-height:11px;letter-spacing:-0.241px;color:#2b2f36;">16.74</div>
<svg style="left:10.50px;top:256.15px" width="12" height="8"><path d="M0.5 0.5 L11 0.5 L5.75 7 Z" fill="#5f6670"/></svg>
<div class="t" style="left:27.70px;top:253.00px;font-size:12px;line-height:12px;letter-spacing:-0.148px;color:#2b2f36;">postgresql</div>
<svg style="left:30.00px;top:281.95px" width="14" height="14"><path d="M7 1.2 L8.7 5 L12.8 5.3 L9.7 8 L10.6 12.1 L7 9.9 L3.4 12.1 L4.3 8 L1.2 5.3 L5.3 5 Z" fill="none" stroke="#5f6670" stroke-width="1.2" stroke-linejoin="round"/></svg>
<div class="t" style="left:51.40px;top:283.00px;font-size:12px;line-height:12px;letter-spacing:-0.119px;color:#4f86e8;">130.postgresql</div>
<svg style="left:131.60px;top:280.15px" width="19" height="19" viewBox="0 0 19 19"><path d="M3 0.9 L15 0.9 C17 1.2 17.9 3 17.7 5 C17.4 7.5 16.3 9.5 15.2 10.8 L17.6 11.6 C17.1 12.6 15.6 12.7 14.1 12.3 C13.9 15.2 13.5 17.7 11.4 17.8 C9.4 17.9 8.8 15.6 8.5 13.3 C6.5 13.9 4.4 13.1 3.4 11.6 C1.9 9 1 6 0.8 4 C0.7 2 1.5 1.1 3 0.9 Z" fill="#336791" stroke="#3a3f46" stroke-width="1.9"/><path d="M3 0.9 L15 0.9 C17 1.2 17.9 3 17.7 5 C17.4 7.5 16.3 9.5 15.2 10.8 L17.6 11.6 C17.1 12.6 15.6 12.7 14.1 12.3 C13.9 15.2 13.5 17.7 11.4 17.8 C9.4 17.9 8.8 15.6 8.5 13.3 C6.5 13.9 4.4 13.1 3.4 11.6 C1.9 9 1 6 0.8 4 C0.7 2 1.5 1.1 3 0.9 Z" fill="none" stroke="#dfe8f2" stroke-width="0.7"/><path d="M5.2 3.6 C4.7 6 4.9 9.5 6.4 12.2 M8.3 3.8 L8.3 11 M8.3 8.6 C9 7.6 10.6 7.6 11 9 L11 14.5 M12.9 2.6 C15.2 4.4 15.6 8.6 13.6 11.2 M15 11.1 L16.9 11.7" fill="none" stroke="#e8eef5" stroke-width="0.75"/></svg>
<div class="t" style="left:405.10px;top:283.00px;font-size:12px;line-height:12px;letter-spacing:-0.125px;color:#2b2f36;">empty</div>
<div class="t" style="left:494.92px;top:283.00px;font-size:12px;line-height:12px;letter-spacing:-0.172px;color:#2b2f36;">10.10.48.130</div>
<div class="t" style="left:591.10px;top:283.00px;font-size:12px;line-height:12px;letter-spacing:-0.439px;color:#2b2f36;">PostgreSQL</div>
<div class="t" style="left:699.20px;top:283.00px;font-size:12px;line-height:12px;letter-spacing:-0.534px;color:#2b2f36;">17</div>
<div style="position:absolute;left:812.30px;top:282.25px;width:63.40px;height:14.00px;background:#eef4fe;border:1px solid #3c7cec;border-radius:2px;box-sizing:border-box;"></div>
<div class="t" style="left:830.51px;top:285.00px;font-size:10px;line-height:10px;letter-spacing:-0.055px;color:#1f4fa8;-webkit-text-stroke:0.2px #1f4fa8;">Active</div>
<div style="position:absolute;left:902.20px;top:282.25px;width:63.40px;height:14.00px;background:#ecfaf3;border:1px solid #1aaa72;border-radius:2px;box-sizing:border-box;"></div>
<div class="t" style="left:917.96px;top:285.00px;font-size:10px;line-height:10px;letter-spacing:-0.032px;color:#145c40;-webkit-text-stroke:0.2px #145c40;">Normal</div>
<div style="position:absolute;left:987.20px;top:283.65px;width:80.00px;height:11.60px;background:#e5e8ec;border-radius:2px;"></div>
<div class="t" style="left:1035.61px;top:284.00px;font-size:11px;line-height:11px;letter-spacing:0.000px;color:#2b2f36;">0</div>
<svg style="left:30.00px;top:311.90px" width="14" height="14"><path d="M7 1.2 L8.7 5 L12.8 5.3 L9.7 8 L10.6 12.1 L7 9.9 L3.4 12.1 L4.3 8 L1.2 5.3 L5.3 5 Z" fill="none" stroke="#5f6670" stroke-width="1.2" stroke-linejoin="round"/></svg>
<div class="t" style="left:51.40px;top:313.00px;font-size:12px;line-height:12px;letter-spacing:-0.235px;color:#4f86e8;">65 pg 14.2 standby</div>
<svg style="left:152.50px;top:310.10px" width="19" height="19" viewBox="0 0 19 19"><path d="M3 0.9 L15 0.9 C17 1.2 17.9 3 17.7 5 C17.4 7.5 16.3 9.5 15.2 10.8 L17.6 11.6 C17.1 12.6 15.6 12.7 14.1 12.3 C13.9 15.2 13.5 17.7 11.4 17.8 C9.4 17.9 8.8 15.6 8.5 13.3 C6.5 13.9 4.4 13.1 3.4 11.6 C1.9 9 1 6 0.8 4 C0.7 2 1.5 1.1 3 0.9 Z" fill="#336791" stroke="#3a3f46" stroke-width="1.9"/><path d="M3 0.9 L15 0.9 C17 1.2 17.9 3 17.7 5 C17.4 7.5 16.3 9.5 15.2 10.8 L17.6 11.6 C17.1 12.6 15.6 12.7 14.1 12.3 C13.9 15.2 13.5 17.7 11.4 17.8 C9.4 17.9 8.8 15.6 8.5 13.3 C6.5 13.9 4.4 13.1 3.4 11.6 C1.9 9 1 6 0.8 4 C0.7 2 1.5 1.1 3 0.9 Z" fill="none" stroke="#dfe8f2" stroke-width="0.7"/><path d="M5.2 3.6 C4.7 6 4.9 9.5 6.4 12.2 M8.3 3.8 L8.3 11 M8.3 8.6 C9 7.6 10.6 7.6 11 9 L11 14.5 M12.9 2.6 C15.2 4.4 15.6 8.6 13.6 11.2 M15 11.1 L16.9 11.7" fill="none" stroke="#e8eef5" stroke-width="0.75"/></svg>
<div class="t" style="left:240.10px;top:313.00px;font-size:12px;line-height:12px;letter-spacing:-0.241px;color:#2b2f36;">65 pg 14.2 standby al...</div>
<div class="t" style="left:405.10px;top:313.00px;font-size:12px;line-height:12px;letter-spacing:-0.125px;color:#2b2f36;">empty</div>
<div class="t" style="left:498.16px;top:313.00px;font-size:12px;line-height:12px;letter-spacing:-0.171px;color:#2b2f36;">10.10.48.65</div>
<div class="t" style="left:591.10px;top:313.00px;font-size:12px;line-height:12px;letter-spacing:-0.439px;color:#2b2f36;">PostgreSQL</div>
<div class="t" style="left:699.20px;top:313.00px;font-size:12px;line-height:12px;letter-spacing:-0.534px;color:#2b2f36;">14</div>
<div style="position:absolute;left:812.30px;top:312.20px;width:63.40px;height:14.00px;background:#eef4fe;border:1px solid #3c7cec;border-radius:2px;box-sizing:border-box;"></div>
<div class="t" style="left:830.51px;top:315.00px;font-size:10px;line-height:10px;letter-spacing:-0.055px;color:#1f4fa8;-webkit-text-stroke:0.2px #1f4fa8;">Active</div>
<div style="position:absolute;left:902.20px;top:312.20px;width:63.40px;height:14.00px;background:#ecfaf3;border:1px solid #1aaa72;border-radius:2px;box-sizing:border-box;"></div>
<div class="t" style="left:917.96px;top:315.00px;font-size:10px;line-height:10px;letter-spacing:-0.032px;color:#145c40;-webkit-text-stroke:0.2px #145c40;">Normal</div>
<div style="position:absolute;left:987.20px;top:313.60px;width:80.00px;height:11.60px;background:#e5e8ec;border-radius:2px;"></div>
<div style="position:absolute;left:987.20px;top:313.60px;width:17.00px;height:11.60px;background:#8ab8f5;border-radius:2px 0 0 2px;"></div>
<div class="t" style="left:1021.91px;top:314.00px;font-size:11px;line-height:11px;letter-spacing:-0.241px;color:#2b2f36;">16.63</div>
<svg style="left:30.00px;top:341.85px" width="14" height="14"><path d="M7 1.2 L8.7 5 L12.8 5.3 L9.7 8 L10.6 12.1 L7 9.9 L3.4 12.1 L4.3 8 L1.2 5.3 L5.3 5 Z" fill="#f39c12" stroke="#f39c12" stroke-width="1.2" stroke-linejoin="round"/></svg>
<div class="t" style="left:51.40px;top:343.00px;font-size:12px;line-height:12px;letter-spacing:-0.200px;color:#4f86e8;">70 pg 14.7 single</div>
<svg style="left:142.60px;top:340.05px" width="19" height="19" viewBox="0 0 19 19"><path d="M3 0.9 L15 0.9 C17 1.2 17.9 3 17.7 5 C17.4 7.5 16.3 9.5 15.2 10.8 L17.6 11.6 C17.1 12.6 15.6 12.7 14.1 12.3 C13.9 15.2 13.5 17.7 11.4 17.8 C9.4 17.9 8.8 15.6 8.5 13.3 C6.5 13.9 4.4 13.1 3.4 11.6 C1.9 9 1 6 0.8 4 C0.7 2 1.5 1.1 3 0.9 Z" fill="#336791" stroke="#3a3f46" stroke-width="1.9"/><path d="M3 0.9 L15 0.9 C17 1.2 17.9 3 17.7 5 C17.4 7.5 16.3 9.5 15.2 10.8 L17.6 11.6 C17.1 12.6 15.6 12.7 14.1 12.3 C13.9 15.2 13.5 17.7 11.4 17.8 C9.4 17.9 8.8 15.6 8.5 13.3 C6.5 13.9 4.4 13.1 3.4 11.6 C1.9 9 1 6 0.8 4 C0.7 2 1.5 1.1 3 0.9 Z" fill="none" stroke="#dfe8f2" stroke-width="0.7"/><path d="M5.2 3.6 C4.7 6 4.9 9.5 6.4 12.2 M8.3 3.8 L8.3 11 M8.3 8.6 C9 7.6 10.6 7.6 11 9 L11 14.5 M12.9 2.6 C15.2 4.4 15.6 8.6 13.6 11.2 M15 11.1 L16.9 11.7" fill="none" stroke="#e8eef5" stroke-width="0.75"/></svg>
<div class="t" style="left:405.10px;top:343.00px;font-size:12px;line-height:12px;letter-spacing:-0.125px;color:#2b2f36;">empty</div>
<div class="t" style="left:498.16px;top:343.00px;font-size:12px;line-height:12px;letter-spacing:-0.171px;color:#2b2f36;">10.10.48.70</div>
<div class="t" style="left:591.10px;top:343.00px;font-size:12px;line-height:12px;letter-spacing:-0.439px;color:#2b2f36;">PostgreSQL</div>
<div class="t" style="left:699.20px;top:343.00px;font-size:12px;line-height:12px;letter-spacing:-0.534px;color:#2b2f36;">14</div>
<div style="position:absolute;left:812.30px;top:342.15px;width:63.40px;height:14.00px;background:#eef4fe;border:1px solid #3c7cec;border-radius:2px;box-sizing:border-box;"></div>
<div class="t" style="left:830.51px;top:345.00px;font-size:10px;line-height:10px;letter-spacing:-0.055px;color:#1f4fa8;-webkit-text-stroke:0.2px #1f4fa8;">Active</div>
<div style="position:absolute;left:902.20px;top:342.15px;width:63.40px;height:14.00px;background:#ecfaf3;border:1px solid #1aaa72;border-radius:2px;box-sizing:border-box;"></div>
<div class="t" style="left:917.96px;top:345.00px;font-size:10px;line-height:10px;letter-spacing:-0.032px;color:#145c40;-webkit-text-stroke:0.2px #145c40;">Normal</div>
<div style="position:absolute;left:987.20px;top:343.55px;width:80.00px;height:11.60px;background:#e5e8ec;border-radius:2px;"></div>
<div style="position:absolute;left:987.20px;top:343.55px;width:16.00px;height:11.60px;background:#8ab8f5;border-radius:2px 0 0 2px;"></div>
<div class="t" style="left:1021.91px;top:344.00px;font-size:11px;line-height:11px;letter-spacing:-0.241px;color:#2b2f36;">16.53</div>
<svg style="left:30.00px;top:371.75px" width="14" height="14"><path d="M7 1.2 L8.7 5 L12.8 5.3 L9.7 8 L10.6 12.1 L7 9.9 L3.4 12.1 L4.3 8 L1.2 5.3 L5.3 5 Z" fill="none" stroke="#5f6670" stroke-width="1.2" stroke-linejoin="round"/></svg>
<div class="t" style="left:51.40px;top:373.00px;font-size:12px;line-height:12px;letter-spacing:0.120px;color:#4f86e8;">pg 140</div>
<svg style="left:91.70px;top:369.95px" width="19" height="19" viewBox="0 0 19 19"><path d="M3 0.9 L15 0.9 C17 1.2 17.9 3 17.7 5 C17.4 7.5 16.3 9.5 15.2 10.8 L17.6 11.6 C17.1 12.6 15.6 12.7 14.1 12.3 C13.9 15.2 13.5 17.7 11.4 17.8 C9.4 17.9 8.8 15.6 8.5 13.3 C6.5 13.9 4.4 13.1 3.4 11.6 C1.9 9 1 6 0.8 4 C0.7 2 1.5 1.1 3 0.9 Z" fill="#336791" stroke="#3a3f46" stroke-width="1.9"/><path d="M3 0.9 L15 0.9 C17 1.2 17.9 3 17.7 5 C17.4 7.5 16.3 9.5 15.2 10.8 L17.6 11.6 C17.1 12.6 15.6 12.7 14.1 12.3 C13.9 15.2 13.5 17.7 11.4 17.8 C9.4 17.9 8.8 15.6 8.5 13.3 C6.5 13.9 4.4 13.1 3.4 11.6 C1.9 9 1 6 0.8 4 C0.7 2 1.5 1.1 3 0.9 Z" fill="none" stroke="#dfe8f2" stroke-width="0.7"/><path d="M5.2 3.6 C4.7 6 4.9 9.5 6.4 12.2 M8.3 3.8 L8.3 11 M8.3 8.6 C9 7.6 10.6 7.6 11 9 L11 14.5 M12.9 2.6 C15.2 4.4 15.6 8.6 13.6 11.2 M15 11.1 L16.9 11.7" fill="none" stroke="#e8eef5" stroke-width="0.75"/></svg>
<div class="t" style="left:405.10px;top:373.00px;font-size:12px;line-height:12px;letter-spacing:-0.125px;color:#2b2f36;">empty</div>
<div class="t" style="left:494.92px;top:373.00px;font-size:12px;line-height:12px;letter-spacing:-0.172px;color:#2b2f36;">10.10.48.140</div>
<div class="t" style="left:591.10px;top:373.00px;font-size:12px;line-height:12px;letter-spacing:-0.439px;color:#2b2f36;">PostgreSQL</div>
<div class="t" style="left:699.20px;top:373.00px;font-size:12px;line-height:12px;letter-spacing:-0.534px;color:#2b2f36;">17</div>
<div style="position:absolute;left:812.30px;top:372.05px;width:63.40px;height:14.00px;background:#eef4fe;border:1px solid #3c7cec;border-radius:2px;box-sizing:border-box;"></div>
<div class="t" style="left:830.51px;top:375.00px;font-size:10px;line-height:10px;letter-spacing:-0.055px;color:#1f4fa8;-webkit-text-stroke:0.2px #1f4fa8;">Active</div>
<div style="position:absolute;left:902.20px;top:372.05px;width:63.40px;height:14.00px;background:#fff8ec;border:1px solid #f0a020;border-radius:2px;box-sizing:border-box;"></div>
<div class="t" style="left:915.67px;top:375.00px;font-size:10px;line-height:10px;letter-spacing:-0.031px;color:#8a5a00;-webkit-text-stroke:0.2px #8a5a00;">Warning</div>
<div style="position:absolute;left:987.20px;top:373.45px;width:80.00px;height:11.60px;background:#e5e8ec;border-radius:2px;"></div>
<div class="t" style="left:1035.61px;top:374.00px;font-size:11px;line-height:11px;letter-spacing:0.000px;color:#2b2f36;">0</div>
<div style="position:absolute;left:2.00px;top:375.00px;width:1846.00px;height:5.30px;background:#d5d8dc;"></div>
</div>
<div style="position:absolute;left:14px;top:924.3px;width:1848px;height:1px;background:#c9cdd2;"></div>
<div style="position:absolute;left:1014px;top:0px;width:48px;height:941px;background:linear-gradient(to right, rgba(20,40,30,0), rgba(20,40,30,0.065));"></div>
<div style="position:absolute;left:1036.5px;top:393px;width:26px;height:181px;background:#3f7ff0;border-radius:4px 0 0 4px;"></div>
<div style="position:absolute;left:1036.5px;top:482px;width:26px;height:1.2px;background:#8cb3f7;"></div>
<div class="t" style="left:1043px;top:444.00px;transform-origin:0 0;transform:rotate(-90deg);font-size:11px;line-height:11px;font-weight:bold;color:#fff;letter-spacing:-0.890px;">Expand</div>
<svg style="left:1045px;top:453px" width="8" height="9"><path d="M6 1 L2.5 4.5 L6 8" fill="none" stroke="#fff" stroke-width="1.5"/></svg>
<div class="t" style="left:1043px;top:539.00px;transform-origin:0 0;transform:rotate(-90deg);font-size:11px;line-height:11px;font-weight:bold;color:#fff;letter-spacing:-0.479px;">Collapse</div>
<svg style="left:1045px;top:547px" width="8" height="9"><path d="M2 1 L5.5 4.5 L2 8" fill="none" stroke="#fff" stroke-width="1.5"/></svg>
<div style="position:absolute;left:1062px;top:0px;width:804px;height:941px;background:#fff;"></div>
<div class="t" style="left:1073.40px;top:12.00px;font-size:14px;line-height:14px;letter-spacing:0.216px;color:#1f2328;">Instance: 60 pg cluster</div>
<div style="position:absolute;left:1733px;top:8px;width:103px;height:22px;background:#e3e6ea;border-radius:3px;"></div>
<svg style="left:1745px;top:12px" width="14" height="14"><circle cx="7" cy="7" r="5.6" fill="none" stroke="#4a5058" stroke-width="1.2"/><path d="M6.6 4 L6.6 7.4 L9 9" fill="none" stroke="#4a5058" stroke-width="1.1"/></svg>
<div class="t" style="left:1763.00px;top:14.00px;font-size:11px;line-height:11px;letter-spacing:-0.062px;color:#25292e;-webkit-text-stroke:0.35px #25292e;">Slide History</div>
<svg style="left:1846px;top:11px" width="14" height="14"><path d="M1.5 1.5 L12.5 12.5 M12.5 1.5 L1.5 12.5" stroke="#3b4048" stroke-width="1.5"/></svg>
<div style="position:absolute;left:1062px;top:40px;width:804px;height:1.5px;background:#c9cdd2;"></div>
<div style="position:absolute;left:1062px;top:41.5px;width:804px;height:27.5px;background:#eceff2;"></div>
<div style="position:absolute;left:1149px;top:40px;width:62px;height:29px;background:#fff;"></div>
<div style="position:absolute;left:1149px;top:40px;width:62px;height:2px;background:#3f7ff0;"></div>
<div class="t" style="left:1077.70px;top:49.00px;font-size:11px;line-height:11px;letter-spacing:-0.420px;color:#838991;font-weight:bold;">Information</div>
<div class="t" style="left:1165.00px;top:49.00px;font-size:11px;line-height:11px;letter-spacing:-0.280px;color:#1f2328;font-weight:bold;">Metric</div>
<div class="t" style="left:1227.00px;top:49.00px;font-size:11px;line-height:11px;letter-spacing:-0.550px;color:#838991;font-weight:bold;">Active Session</div>
<div class="t" style="left:1329.60px;top:49.00px;font-size:11px;line-height:11px;letter-spacing:-0.736px;color:#838991;font-weight:bold;">SQL List</div>
<div class="t" style="left:1400.70px;top:49.00px;font-size:11px;line-height:11px;letter-spacing:-0.538px;color:#838991;font-weight:bold;">Lock Info</div>
<div class="t" style="left:1476.00px;top:49.00px;font-size:11px;line-height:11px;letter-spacing:-0.263px;color:#838991;font-weight:bold;">Alert</div>
<div class="t" style="left:1530.80px;top:49.00px;font-size:11px;line-height:11px;letter-spacing:-0.450px;color:#838991;font-weight:bold;">Parameter</div>
<div class="t" style="left:1612.00px;top:49.00px;font-size:11px;line-height:11px;letter-spacing:-0.463px;color:#838991;font-weight:bold;">Host Process List</div>
<div class="t" style="left:1071.40px;top:94.00px;font-size:12px;line-height:12px;letter-spacing:-0.467px;color:#1f2328;font-weight:bold;">Instance Stat</div>
<svg style="left:1146px;top:93px" width="14" height="14"><circle cx="7" cy="7" r="6" fill="#5f6670"/><text x="7" y="10.3" font-size="9.5" font-weight="bold" fill="#fff" text-anchor="middle" font-family="Liberation Sans">?</text></svg>
<svg style="left:1339px;top:93px" width="14" height="14"><defs><radialGradient id="aig" cx="0.42" cy="0.45" r="0.6"><stop offset="0" stop-color="#7fe0b0"/><stop offset="0.45" stop-color="#6aa8e8"/><stop offset="1" stop-color="#a98cf0"/></radialGradient></defs><circle cx="7" cy="7" r="6" fill="url(#aig)"/></svg>
<div class="t" style="left:1355.30px;top:94.00px;font-size:11px;line-height:11px;letter-spacing:-0.484px;color:#4f6ff0;font-weight:bold;background:linear-gradient(to right,#3d86f2,#7a5cf2);-webkit-background-clip:text;background-clip:text;color:transparent;">AI Anomaly Detection</div>
<div style="position:absolute;left:1467px;top:93px;width:27px;height:14px;background:#e2e5e9;border-radius:7px;"></div>
<svg style="left:1467px;top:93px" width="14" height="14"><circle cx="7" cy="7" r="5.8" fill="#fff"/></svg>
<div style="position:absolute;left:1532px;top:89px;width:252px;height:22px;box-sizing:border-box;border-radius:3px;padding:1px;background:linear-gradient(to right,#c3c8ce 0%,#c3c8ce 45%,#1db27e 62%,#1db27e 100%);"><div style="width:100%;height:100%;background:#effbf5;border-radius:2px;"></div></div>
<div style="position:absolute;left:1535px;top:93px;width:32px;height:14px;background:#e3e6ea;border-radius:2px;"></div>
<div class="t" style="left:1543.62px;top:95.00px;font-size:11px;line-height:11px;letter-spacing:-0.536px;color:#3b4048;">5m</div>
<div style="position:absolute;left:1569px;top:93px;width:38px;height:15px;border:1.5px solid #1db27e;border-radius:2px;box-sizing:border-box;background:#effbf5;"></div>
<div class="t" style="left:1577.88px;top:95.00px;font-size:11px;line-height:11px;letter-spacing:-0.587px;color:#1e4d3c;font-weight:bold;">Live</div>
<div class="t" style="left:1612.20px;top:95.00px;font-size:11px;line-height:11px;letter-spacing:-0.181px;color:#25292e;">2025.10.22 13:01:36</div>
<svg style="left:1769px;top:97px" width="8" height="6"><path d="M0.5 0.8 L6.5 0.8 L3.5 4.8 Z" fill="#5f6670"/></svg>
<div style="position:absolute;left:1789px;top:89px;width:22px;height:22px;background:#f7f8fa;border:1px solid #d0d4d9;border-radius:3px;box-sizing:border-box;"></div>
<div style="position:absolute;left:1813px;top:89px;width:21px;height:22px;background:#f7f8fa;border:1px solid #d0d4d9;border-radius:3px;box-sizing:border-box;"></div>
<div style="position:absolute;left:1836px;top:89px;width:22px;height:22px;background:#f7f8fa;border:1px solid #d0d4d9;border-radius:3px;box-sizing:border-box;"></div>
<svg style="left:1794px;top:95px" width="12" height="10"><path d="M6 1 L0.8 5 L6 9 Z M11.5 1 L6.3 5 L11.5 9 Z" fill="#5f6670"/></svg>
<svg style="left:1818px;top:95px" width="12" height="10"><rect x="2" y="0.8" width="3" height="8.4" fill="#5f6670"/><rect x="7" y="0.8" width="3" height="8.4" fill="#5f6670"/></svg>
<svg style="left:1842px;top:95px" width="12" height="10"><path d="M0.5 1 L5.7 5 L0.5 9 Z M6 1 L11.2 5 L6 9 Z" fill="#5f6670"/></svg>
<div style="position:absolute;left:1752px;top:128px;width:106px;height:23px;background:#eceff2;border-radius:3px;"></div>
<div style="position:absolute;left:1754px;top:130px;width:49px;height:18px;background:#fff;border-radius:2px;"></div>
<div class="t" style="left:1760.36px;top:135.00px;font-size:10px;line-height:10px;letter-spacing:-0.189px;color:#2b2f36;">Instance</div>
<div class="t" style="left:1808.85px;top:135.00px;font-size:10px;line-height:10px;letter-spacing:-0.214px;color:#8a9099;">Database</div>
<div style="position:absolute;left:1071px;top:160.00px;width:389px;height:193px;box-sizing:border-box;background:#f7f8fa;border:1px solid #cdd1d6;border-radius:3px;overflow:hidden;">
<div class="t" style="left:11.30px;top:9.60px;font-size:12px;line-height:12px;font-weight:bold;color:#1f2328;letter-spacing:-0.179px;">Active Backend</div>
<svg style="left:-1px;top:-1px" width="389" height="213" font-family="Liberation Sans"><g fill="#4a5058"><circle cx="369.5" cy="15.6" r="1.5"/><circle cx="374" cy="15.6" r="1.5"/><circle cx="378.5" cy="15.6" r="1.5"/></g><line x1="57.4" y1="46.8" x2="346" y2="46.8" stroke="#dcdfe3" stroke-width="1"/><text x="48.4" y="50.199999999999996" font-size="10" fill="#555b62" text-anchor="end">39</text><line x1="57.4" y1="86.6" x2="346" y2="86.6" stroke="#dcdfe3" stroke-width="1"/><text x="48.4" y="90.0" font-size="10" fill="#555b62" text-anchor="end">26</text><line x1="57.4" y1="124.5" x2="346" y2="124.5" stroke="#dcdfe3" stroke-width="1"/><text x="48.4" y="127.9" font-size="10" fill="#555b62" text-anchor="end">13</text><line x1="57.4" y1="163.0" x2="346" y2="163.0" stroke="#dcdfe3" stroke-width="1"/><text x="48.4" y="166.4" font-size="10" fill="#555b62" text-anchor="end">0</text><text x="57.4" y="179.2" font-size="10" fill="#555b62" text-anchor="middle" letter-spacing="-0.2">22 12:56:35</text><text x="129.55" y="179.2" font-size="10" fill="#555b62" text-anchor="middle" letter-spacing="-0.2">12:57:48</text><text x="201.70000000000002" y="179.2" font-size="10" fill="#555b62" text-anchor="middle" letter-spacing="-0.2">12:59:02</text><text x="273.85" y="179.2" font-size="10" fill="#555b62" text-anchor="middle" letter-spacing="-0.2">13:00:16</text><text x="346.0" y="179.2" font-size="10" fill="#555b62" text-anchor="middle" letter-spacing="-0.2">13:01:30</text><text transform="translate(22.5,106) rotate(-90)" font-size="9" fill="#3b4048" text-anchor="middle">count</text><path d="M57.53 71.03 L82.30 71.03 L88.33 64.78 L92.79 62.10 L101.72 62.10 L106.19 64.78 L111.77 71.03 L140.79 71.03 L146.37 64.78 L150.83 62.10 L160.88 62.10 L165.34 64.78 L170.92 71.03 L199.94 71.03 L205.52 64.78 L214.45 59.87 L223.38 64.78 L228.96 71.03 L257.97 71.03 L263.55 64.78 L273.60 64.78 L278.06 62.54 L282.53 64.78 L288.11 71.03 L317.12 71.03 L322.71 64.78 L327.17 62.10 L336.10 62.10 L340.56 64.78 L346.14 71.03" fill="none" stroke="#4cbb5a" stroke-width="2" stroke-linejoin="round"/></svg>
</div>
<div style="position:absolute;left:1469px;top:160.00px;width:389px;height:193px;box-sizing:border-box;background:#f7f8fa;border:1px solid #cdd1d6;border-radius:3px;overflow:hidden;">
<div class="t" style="left:11.30px;top:9.60px;font-size:12px;line-height:12px;font-weight:bold;color:#1f2328;letter-spacing:-0.172px;">Connection Ratio</div>
<svg style="left:-1px;top:-1px" width="389" height="213" font-family="Liberation Sans"><g fill="#4a5058"><circle cx="369.5" cy="15.6" r="1.5"/><circle cx="374" cy="15.6" r="1.5"/><circle cx="378.5" cy="15.6" r="1.5"/></g><line x1="57.4" y1="46.8" x2="346" y2="46.8" stroke="#dcdfe3" stroke-width="1"/><text x="48.4" y="50.199999999999996" font-size="10" fill="#555b62" text-anchor="end">81</text><line x1="57.4" y1="86.6" x2="346" y2="86.6" stroke="#dcdfe3" stroke-width="1"/><text x="48.4" y="90.0" font-size="10" fill="#555b62" text-anchor="end">54</text><line x1="57.4" y1="124.5" x2="346" y2="124.5" stroke="#dcdfe3" stroke-width="1"/><text x="48.4" y="127.9" font-size="10" fill="#555b62" text-anchor="end">27</text><line x1="57.4" y1="163.0" x2="346" y2="163.0" stroke="#dcdfe3" stroke-width="1"/><text x="48.4" y="166.4" font-size="10" fill="#555b62" text-anchor="end">0</text><text x="57.4" y="179.2" font-size="10" fill="#555b62" text-anchor="middle" letter-spacing="-0.2">22 12:56:35</text><text x="129.55" y="179.2" font-size="10" fill="#555b62" text-anchor="middle" letter-spacing="-0.2">12:57:48</text><text x="201.70000000000002" y="179.2" font-size="10" fill="#555b62" text-anchor="middle" letter-spacing="-0.2">12:59:02</text><text x="273.85" y="179.2" font-size="10" fill="#555b62" text-anchor="middle" letter-spacing="-0.2">13:00:16</text><text x="346.0" y="179.2" font-size="10" fill="#555b62" text-anchor="middle" letter-spacing="-0.2">13:01:30</text><text transform="translate(22.5,106) rotate(-90)" font-size="9" fill="#3b4048" text-anchor="middle">%</text><path d="M57.29 107.19 L62.43 103.84 L68.01 104.29 L72.03 106.52 L77.61 103.84 L82.52 98.71 L87.43 100.94 L92.12 103.84 L97.03 98.71 L101.94 102.05 L105.96 110.98 L111.54 104.29 L116.45 104.29 L121.58 101.61 L126.49 105.62 L131.18 108.30 L136.09 101.61 L140.55 94.91 L145.46 99.82 L150.60 106.07 L156.18 101.61 L161.09 102.05 L165.55 103.17 L170.69 99.82 L175.15 106.52 L180.29 107.19 L185.64 105.40 L190.78 104.29 L194.57 103.84 L199.71 96.03 L204.62 99.82 L209.30 96.70 L214.66 102.72 L219.79 100.94 L223.59 118.35 L229.17 102.72 L234.30 103.84 L239.21 104.29 L243.68 104.96 L248.81 118.35 L253.72 104.96 L257.74 67.68 L263.32 68.12 L268.23 71.47 L273.37 68.57 L277.83 60.98 L282.74 99.82 L287.88 101.61 L292.79 99.82 L297.92 107.19 L302.83 102.05 L307.96 102.05 L312.43 100.94 L317.34 97.59 L322.47 100.49 L326.94 104.96 L332.07 99.82 L336.98 98.26 L341.00 107.19 L345.91 104.96" fill="none" stroke="#4cbb5a" stroke-width="2" stroke-linejoin="round"/></svg>
</div>
<div style="position:absolute;left:1071px;top:363.00px;width:389px;height:193px;box-sizing:border-box;background:#f7f8fa;border:1px solid #cdd1d6;border-radius:3px;overflow:hidden;">
<div class="t" style="left:11.30px;top:9.60px;font-size:12px;line-height:12px;font-weight:bold;color:#1f2328;letter-spacing:-0.166px;">Blks Hit</div>
<svg style="left:-1px;top:-1px" width="389" height="213" font-family="Liberation Sans"><g fill="#4a5058"><circle cx="369.5" cy="15.6" r="1.5"/><circle cx="374" cy="15.6" r="1.5"/><circle cx="378.5" cy="15.6" r="1.5"/></g><line x1="73.6" y1="46.8" x2="346" y2="46.8" stroke="#dcdfe3" stroke-width="1"/><text x="64.6" y="50.199999999999996" font-size="10" fill="#555b62" text-anchor="end">284.838</text><line x1="73.6" y1="86.6" x2="346" y2="86.6" stroke="#dcdfe3" stroke-width="1"/><text x="64.6" y="90.0" font-size="10" fill="#555b62" text-anchor="end">189.892</text><line x1="73.6" y1="124.5" x2="346" y2="124.5" stroke="#dcdfe3" stroke-width="1"/><text x="64.6" y="127.9" font-size="10" fill="#555b62" text-anchor="end">94.946</text><line x1="73.6" y1="163.0" x2="346" y2="163.0" stroke="#dcdfe3" stroke-width="1"/><text x="64.6" y="166.4" font-size="10" fill="#555b62" text-anchor="end">0</text><text x="73.6" y="179.2" font-size="10" fill="#555b62" text-anchor="middle" letter-spacing="-0.2">22 12:56:35</text><text x="209.79999999999998" y="179.2" font-size="10" fill="#555b62" text-anchor="middle" letter-spacing="-0.2">12:59:02</text><text x="346.0" y="179.2" font-size="10" fill="#555b62" text-anchor="middle" letter-spacing="-0.2">13:01:30</text><text transform="translate(22.5,106) rotate(-90)" font-size="9" fill="#3b4048" text-anchor="middle">K count</text><path d="M73.60 154.60 L79.09 67.15 L83.92 156.80 L88.32 65.61 L92.71 155.70 L97.11 62.31 L101.72 149.11 L106.12 67.15 L110.95 156.80 L114.91 68.91 L120.18 155.70 L125.67 64.51 L129.63 154.60 L134.46 68.91 L138.42 155.70 L143.47 67.15 L147.21 151.31 L152.70 62.31 L156.44 152.40 L161.49 67.15 L166.98 156.80 L170.94 68.47 L175.77 155.70 L180.17 68.47 L185.00 155.70 L188.96 68.91 L194.01 153.50 L198.18 67.15 L203.24 156.80 L208.73 60.12 L212.03 154.60 L217.52 65.61 L221.48 154.60 L226.75 70.00 L230.71 156.36 L235.76 64.51 L239.49 153.50 L244.99 67.15 L250.04 157.90 L254.22 67.15 L258.83 152.40 L263.23 56.38 L268.06 150.21 L272.45 71.10 L276.85 154.60 L280.80 153.50 L286.30 144.71 L291.79 66.71 L295.53 152.40 L301.02 68.91 L304.75 154.60 L309.81 65.61 L313.76 155.70 L319.04 62.31 L322.55 155.70 L328.05 63.41 L331.78 156.80 L337.28 67.15 L342.11 156.80 L346.06 67.15" fill="none" stroke="#4cbb5a" stroke-width="2" stroke-linejoin="round"/></svg>
</div>
<div style="position:absolute;left:1469px;top:363.00px;width:389px;height:193px;box-sizing:border-box;background:#f7f8fa;border:1px solid #cdd1d6;border-radius:3px;overflow:hidden;">
<div class="t" style="left:11.30px;top:9.60px;font-size:12px;line-height:12px;font-weight:bold;color:#1f2328;letter-spacing:-0.189px;">Blks Read</div>
<svg style="left:-1px;top:-1px" width="389" height="213" font-family="Liberation Sans"><g fill="#4a5058"><circle cx="369.5" cy="15.6" r="1.5"/><circle cx="374" cy="15.6" r="1.5"/><circle cx="378.5" cy="15.6" r="1.5"/></g><line x1="73.6" y1="46.8" x2="346" y2="46.8" stroke="#dcdfe3" stroke-width="1"/><text x="64.6" y="50.199999999999996" font-size="10" fill="#555b62" text-anchor="end">209.796</text><line x1="73.6" y1="86.6" x2="346" y2="86.6" stroke="#dcdfe3" stroke-width="1"/><text x="64.6" y="90.0" font-size="10" fill="#555b62" text-anchor="end">139.864</text><line x1="73.6" y1="124.5" x2="346" y2="124.5" stroke="#dcdfe3" stroke-width="1"/><text x="64.6" y="127.9" font-size="10" fill="#555b62" text-anchor="end">69.932</text><line x1="73.6" y1="163.0" x2="346" y2="163.0" stroke="#dcdfe3" stroke-width="1"/><text x="64.6" y="166.4" font-size="10" fill="#555b62" text-anchor="end">0</text><text x="73.6" y="179.2" font-size="10" fill="#555b62" text-anchor="middle" letter-spacing="-0.2">22 12:56:35</text><text x="209.79999999999998" y="179.2" font-size="10" fill="#555b62" text-anchor="middle" letter-spacing="-0.2">12:59:02</text><text x="346.0" y="179.2" font-size="10" fill="#555b62" text-anchor="middle" letter-spacing="-0.2">13:01:30</text><text transform="translate(22.5,106) rotate(-90)" font-size="9" fill="#3b4048" text-anchor="middle">K blocks</text><path d="M73.77 160.81 L78.78 57.35 L84.01 161.90 L87.93 57.35 L92.94 161.90 L97.08 57.35 L102.09 161.90 L106.01 57.35 L111.24 161.90 L115.16 57.35 L120.60 161.90 L125.39 57.35 L129.75 161.90 L134.32 57.35 L138.68 161.90 L143.47 57.35 L147.83 161.90 L152.62 57.35 L156.98 161.90 L161.55 57.35 L167.00 161.90 L171.14 57.35 L176.14 161.90 L180.07 57.35 L185.29 161.90 L189.21 57.35 L194.22 161.90 L198.36 57.35 L203.81 161.90 L208.38 57.35 L212.74 161.90 L217.53 57.35 L221.89 161.90 L226.68 57.35 L230.60 161.90 L235.61 57.35 L239.75 161.90 L244.76 57.35 L250.20 161.90 L254.12 57.35 L258.92 161.90 L263.27 57.35 L268.28 161.90 L272.42 57.35 L276.99 161.90 L281.57 161.90 L286.14 161.90 L291.59 56.47 L295.94 161.90 L300.74 56.47 L304.66 161.90 L309.67 56.47 L313.81 161.90 L318.82 56.47 L322.52 161.90 L327.53 56.47 L331.88 161.90 L337.33 56.47 L342.12 161.90 L346.48 56.47" fill="none" stroke="#4cbb5a" stroke-width="2" stroke-linejoin="round"/></svg>
</div>
<div style="position:absolute;left:1071px;top:565.60px;width:389px;height:193px;box-sizing:border-box;background:#f7f8fa;border:1px solid #cdd1d6;border-radius:3px;overflow:hidden;">
<div class="t" style="left:11.30px;top:9.60px;font-size:12px;line-height:12px;font-weight:bold;color:#1f2328;letter-spacing:-0.175px;">Locks Waiting</div>
<svg style="left:-1px;top:-1px" width="389" height="213" font-family="Liberation Sans"><g fill="#4a5058"><circle cx="369.5" cy="15.6" r="1.5"/><circle cx="374" cy="15.6" r="1.5"/><circle cx="378.5" cy="15.6" r="1.5"/></g><line x1="57.4" y1="46.8" x2="346" y2="46.8" stroke="#dcdfe3" stroke-width="1"/><text x="48.4" y="50.199999999999996" font-size="10" fill="#555b62" text-anchor="end">30</text><line x1="57.4" y1="86.6" x2="346" y2="86.6" stroke="#dcdfe3" stroke-width="1"/><text x="48.4" y="90.0" font-size="10" fill="#555b62" text-anchor="end">20</text><line x1="57.4" y1="124.5" x2="346" y2="124.5" stroke="#dcdfe3" stroke-width="1"/><text x="48.4" y="127.9" font-size="10" fill="#555b62" text-anchor="end">10</text><line x1="57.4" y1="163.0" x2="346" y2="163.0" stroke="#dcdfe3" stroke-width="1"/><text x="48.4" y="166.4" font-size="10" fill="#555b62" text-anchor="end">0</text><text x="57.4" y="179.2" font-size="10" fill="#555b62" text-anchor="middle" letter-spacing="-0.2">22 12:56:35</text><text x="129.55" y="179.2" font-size="10" fill="#555b62" text-anchor="middle" letter-spacing="-0.2">12:57:48</text><text x="201.70000000000002" y="179.2" font-size="10" fill="#555b62" text-anchor="middle" letter-spacing="-0.2">12:59:02</text><text x="273.85" y="179.2" font-size="10" fill="#555b62" text-anchor="middle" letter-spacing="-0.2">13:00:16</text><text x="346.0" y="179.2" font-size="10" fill="#555b62" text-anchor="middle" letter-spacing="-0.2">13:01:30</text><text transform="translate(22.5,106) rotate(-90)" font-size="9" fill="#3b4048" text-anchor="middle">count</text><path d="M57.40 62.10 L346.00 62.10" fill="none" stroke="#4cbb5a" stroke-width="2" stroke-linejoin="round"/></svg>
</div>
<div style="position:absolute;left:1469px;top:565.60px;width:389px;height:193px;box-sizing:border-box;background:#f7f8fa;border:1px solid #cdd1d6;border-radius:3px;overflow:hidden;">
<div class="t" style="left:11.30px;top:9.60px;font-size:12px;line-height:12px;font-weight:bold;color:#1f2328;letter-spacing:-0.278px;">Tps</div>
<svg style="left:-1px;top:-1px" width="389" height="213" font-family="Liberation Sans"><g fill="#4a5058"><circle cx="369.5" cy="15.6" r="1.5"/><circle cx="374" cy="15.6" r="1.5"/><circle cx="378.5" cy="15.6" r="1.5"/></g><line x1="57.4" y1="46.8" x2="346" y2="46.8" stroke="#dcdfe3" stroke-width="1"/><text x="48.4" y="50.199999999999996" font-size="10" fill="#555b62" text-anchor="end">138</text><line x1="57.4" y1="86.6" x2="346" y2="86.6" stroke="#dcdfe3" stroke-width="1"/><text x="48.4" y="90.0" font-size="10" fill="#555b62" text-anchor="end">92</text><line x1="57.4" y1="124.5" x2="346" y2="124.5" stroke="#dcdfe3" stroke-width="1"/><text x="48.4" y="127.9" font-size="10" fill="#555b62" text-anchor="end">46</text><line x1="57.4" y1="163.0" x2="346" y2="163.0" stroke="#dcdfe3" stroke-width="1"/><text x="48.4" y="166.4" font-size="10" fill="#555b62" text-anchor="end">0</text><text x="57.4" y="179.2" font-size="10" fill="#555b62" text-anchor="middle" letter-spacing="-0.2">22 12:56:35</text><text x="129.55" y="179.2" font-size="10" fill="#555b62" text-anchor="middle" letter-spacing="-0.2">12:57:48</text><text x="201.70000000000002" y="179.2" font-size="10" fill="#555b62" text-anchor="middle" letter-spacing="-0.2">12:59:02</text><text x="273.85" y="179.2" font-size="10" fill="#555b62" text-anchor="middle" letter-spacing="-0.2">13:00:16</text><text x="346.0" y="179.2" font-size="10" fill="#555b62" text-anchor="middle" letter-spacing="-0.2">13:01:30</text><text transform="translate(22.5,106) rotate(-90)" font-size="9" fill="#3b4048" text-anchor="middle">count/sec</text><path d="M57.36 106.45 L62.37 123.86 L67.59 131.04 L72.16 108.63 L77.38 119.94 L81.95 94.49 L87.39 99.93 L91.52 119.94 L96.96 115.81 L101.97 131.91 L106.32 107.11 L111.76 119.07 L116.76 109.72 L121.55 124.51 L126.34 124.51 L131.34 115.16 L136.34 106.45 L140.48 95.57 L145.92 116.68 L150.92 112.33 L155.93 116.25 L160.28 132.56 L165.06 105.37 L170.50 131.91 L174.86 111.46 L179.86 128.21 L184.65 108.63 L189.43 123.86 L194.44 124.51 L199.44 74.47 L204.66 120.60 L209.67 114.07 L214.46 109.72 L219.46 140.83 L223.81 103.19 L228.60 114.50 L233.60 114.72 L239.04 112.33 L243.39 133.22 L248.18 111.46 L253.18 116.25 L257.97 59.02 L262.98 110.81 L267.98 129.95 L273.42 102.10 L277.77 112.98 L282.56 86.22 L288.00 124.95 L292.35 104.28 L297.79 131.91 L302.14 119.07 L306.49 97.75 L311.93 122.77 L316.94 87.52 L322.16 129.30 L326.73 101.01 L331.51 117.33 L336.52 118.42 L340.87 122.77 L345.66 115.16" fill="none" stroke="#4cbb5a" stroke-width="2" stroke-linejoin="round"/></svg>
</div>
<div style="position:absolute;left:1071px;top:768.30px;width:389px;height:193px;box-sizing:border-box;background:#f7f8fa;border:1px solid #cdd1d6;border-radius:3px;overflow:hidden;">
<div class="t" style="left:11.30px;top:9.60px;font-size:12px;line-height:12px;font-weight:bold;color:#1f2328;letter-spacing:-0.182px;">Checkpoints Req</div>
<svg style="left:-1px;top:-1px" width="389" height="213" font-family="Liberation Sans"><g fill="#4a5058"><circle cx="369.5" cy="15.6" r="1.5"/><circle cx="374" cy="15.6" r="1.5"/><circle cx="378.5" cy="15.6" r="1.5"/></g><line x1="57.4" y1="46.0" x2="346" y2="46.0" stroke="#dcdfe3" stroke-width="1"/><text x="48.4" y="49.4" font-size="10" fill="#555b62" text-anchor="end">1</text><line x1="57.4" y1="162.0" x2="346" y2="162.0" stroke="#dcdfe3" stroke-width="1"/><text x="48.4" y="165.4" font-size="10" fill="#555b62" text-anchor="end">0</text><text x="57.4" y="179.2" font-size="10" fill="#555b62" text-anchor="middle" letter-spacing="-0.2">22 12:56:35</text><text x="129.55" y="179.2" font-size="10" fill="#555b62" text-anchor="middle" letter-spacing="-0.2">12:57:48</text><text x="201.70000000000002" y="179.2" font-size="10" fill="#555b62" text-anchor="middle" letter-spacing="-0.2">12:59:02</text><text x="273.85" y="179.2" font-size="10" fill="#555b62" text-anchor="middle" letter-spacing="-0.2">13:00:16</text><text x="346.0" y="179.2" font-size="10" fill="#555b62" text-anchor="middle" letter-spacing="-0.2">13:01:30</text><text transform="translate(22.5,106) rotate(-90)" font-size="9" fill="#3b4048" text-anchor="middle">count</text><path d="M57.40 161.60 L346.00 161.60" fill="none" stroke="#4cbb5a" stroke-width="2" stroke-linejoin="round"/></svg>
</div>
<div style="position:absolute;left:1469px;top:768.30px;width:389px;height:193px;box-sizing:border-box;background:#f7f8fa;border:1px solid #cdd1d6;border-radius:3px;overflow:hidden;">
<div class="t" style="left:11.30px;top:9.60px;font-size:12px;line-height:12px;font-weight:bold;color:#1f2328;letter-spacing:-0.179px;">Current Age</div>
<svg style="left:-1px;top:-1px" width="389" height="213" font-family="Liberation Sans"><g fill="#4a5058"><circle cx="369.5" cy="15.6" r="1.5"/><circle cx="374" cy="15.6" r="1.5"/><circle cx="378.5" cy="15.6" r="1.5"/></g><line x1="73.6" y1="46.8" x2="346" y2="46.8" stroke="#dcdfe3" stroke-width="1"/><text x="64.6" y="50.199999999999996" font-size="10" fill="#555b62" text-anchor="end">202.065</text><line x1="73.6" y1="86.6" x2="346" y2="86.6" stroke="#dcdfe3" stroke-width="1"/><text x="64.6" y="90.0" font-size="10" fill="#555b62" text-anchor="end">134.71</text><line x1="73.6" y1="124.5" x2="346" y2="124.5" stroke="#dcdfe3" stroke-width="1"/><text x="64.6" y="127.9" font-size="10" fill="#555b62" text-anchor="end">67.355</text><line x1="73.6" y1="163.0" x2="346" y2="163.0" stroke="#dcdfe3" stroke-width="1"/><text x="64.6" y="166.4" font-size="10" fill="#555b62" text-anchor="end">0</text><text x="73.6" y="179.2" font-size="10" fill="#555b62" text-anchor="middle" letter-spacing="-0.2">22 12:56:35</text><text x="209.79999999999998" y="179.2" font-size="10" fill="#555b62" text-anchor="middle" letter-spacing="-0.2">12:59:02</text><text x="346.0" y="179.2" font-size="10" fill="#555b62" text-anchor="middle" letter-spacing="-0.2">13:01:30</text><text transform="translate(22.5,106) rotate(-90)" font-size="9" fill="#3b4048" text-anchor="middle">K age</text><path d="M73.60 56.70 L346.00 56.70" fill="none" stroke="#4cbb5a" stroke-width="2" stroke-linejoin="round"/></svg>
</div>
<div style="position:absolute;left:1166px;top:81.7px;width:28px;height:28px;border:2px solid #fff;border-radius:50%;background:#d9614a;box-shadow:1px 2px 3px rgba(0,0,0,0.35);"></div>
<div class="t" style="left:1177.30px;top:90.00px;font-size:18px;line-height:18px;letter-spacing:0.000px;color:#fff;font-weight:bold;">4</div>
<div style="position:absolute;left:1067px;top:114px;width:28px;height:28px;border:2px solid #fff;border-radius:50%;background:#d9614a;box-shadow:1px 2px 3px rgba(0,0,0,0.35);"></div>
<div class="t" style="left:1078.30px;top:122.00px;font-size:18px;line-height:18px;letter-spacing:0.000px;color:#fff;font-weight:bold;">2</div>
<div style="position:absolute;left:1492px;top:72px;width:28px;height:28px;border:2px solid #fff;border-radius:50%;background:#d9614a;box-shadow:1px 2px 3px rgba(0,0,0,0.35);"></div>
<div class="t" style="left:1503.30px;top:80.00px;font-size:18px;line-height:18px;letter-spacing:0.000px;color:#fff;font-weight:bold;">1</div>
<div style="position:absolute;left:1714px;top:119px;width:28px;height:28px;border:2px solid #fff;border-radius:50%;background:#d9614a;box-shadow:1px 2px 3px rgba(0,0,0,0.35);"></div>
<div class="t" style="left:1725.30px;top:127.00px;font-size:18px;line-height:18px;letter-spacing:0.000px;color:#fff;font-weight:bold;">3</div>
</body></html>
